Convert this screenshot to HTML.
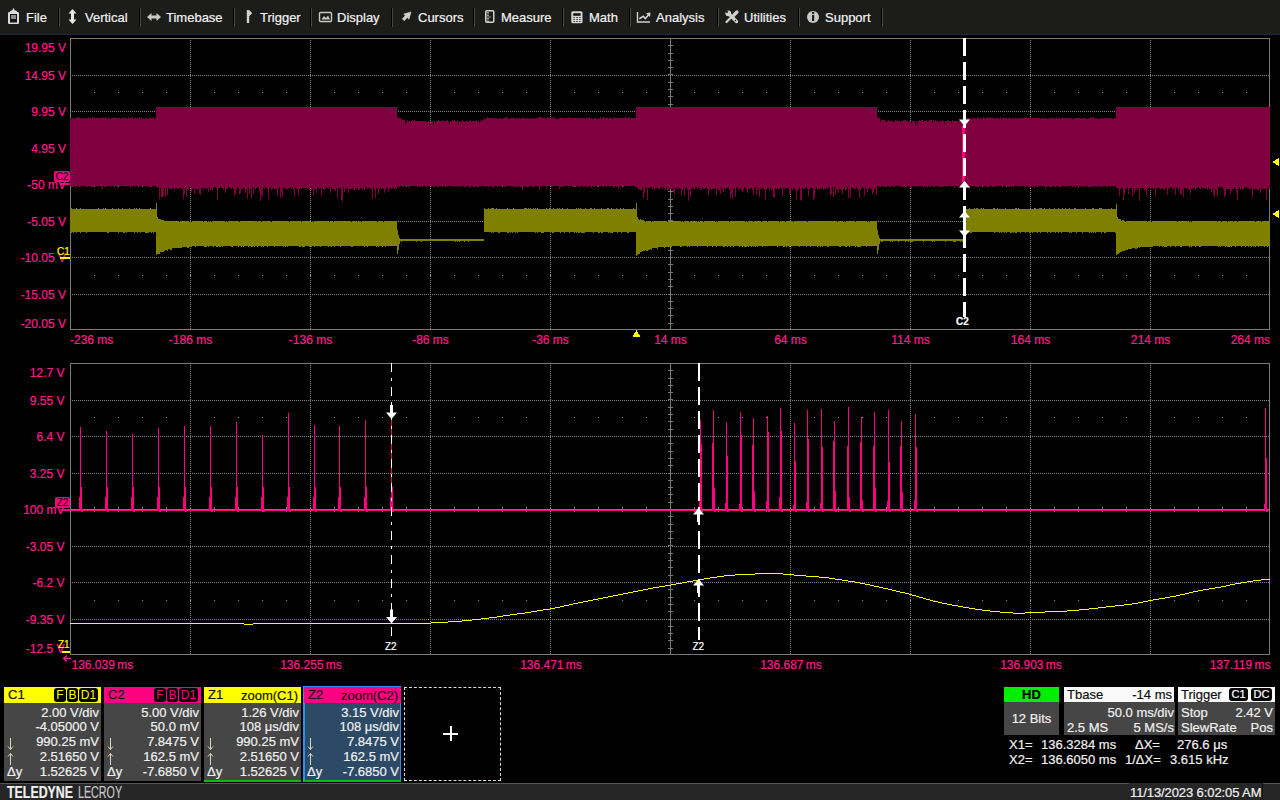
<!DOCTYPE html><html><head><meta charset="utf-8"><style>
*{margin:0;padding:0;box-sizing:border-box}
html,body{width:1280px;height:800px;overflow:hidden;background:#000;font-family:"Liberation Sans",sans-serif;-webkit-text-stroke:0.2px currentColor}
.a{position:absolute;white-space:pre;line-height:1}
#tb{position:absolute;left:0;top:0;width:1280px;height:35px;background:#1c1c1a;border-bottom:1px solid #1c2a38}
.ti{position:absolute;top:11px;font-size:13px;color:#f2f2f2;line-height:13px;white-space:pre}
.sep{position:absolute;top:8px;width:2px;height:19px;border-left:1px solid #000;border-right:1px solid #464646}
.yl{position:absolute;font-size:12px;color:#ff1a8c;line-height:12px;text-align:right;width:60px;left:6px}
.xl{position:absolute;font-size:12px;color:#ff1a8c;line-height:12px;text-align:center;width:100px}
.box{position:absolute;top:687px;height:94px;background:#464646}
.hd{position:absolute;left:0;top:0;right:0;height:16px;font-size:13px;line-height:16px;color:#111;padding-left:4px}
.rw{position:absolute;left:0;right:0;font-size:13px;line-height:13px;color:#f0f0f0;white-space:pre}
.rw .l{position:absolute;left:3px}
.rw .r{position:absolute;right:2px}
.bdg{position:absolute;top:1px;height:14px;background:#000;border-radius:3px;font-size:12px;line-height:14px;text-align:center;-webkit-text-stroke:0}

</style></head><body>
<div id="tb">
<div class="ti" style="left:26px">File</div>
<div class="sep" style="left:58px"></div>
<div class="ti" style="left:85px">Vertical</div>
<div class="sep" style="left:139px"></div>
<div class="ti" style="left:166px">Timebase</div>
<div class="sep" style="left:233px"></div>
<div class="ti" style="left:260px">Trigger</div>
<div class="sep" style="left:310px"></div>
<div class="ti" style="left:337px">Display</div>
<div class="sep" style="left:391px"></div>
<div class="ti" style="left:418px">Cursors</div>
<div class="sep" style="left:473px"></div>
<div class="ti" style="left:501px">Measure</div>
<div class="sep" style="left:562px"></div>
<div class="ti" style="left:589px">Math</div>
<div class="sep" style="left:629px"></div>
<div class="ti" style="left:656px">Analysis</div>
<div class="sep" style="left:717px"></div>
<div class="ti" style="left:744px">Utilities</div>
<div class="sep" style="left:798px"></div>
<div class="ti" style="left:825px">Support</div>
<div class="sep" style="left:881px"></div>
<svg style="position:absolute;left:0;top:0" width="900" height="34">
<rect x="8" y="12" width="11" height="12" rx="1.2" fill="#dcdcdc"/>
<rect x="10" y="14" width="7" height="8.5" fill="#141414"/>
<rect x="11" y="15" width="5" height="4" fill="#8a8a8a"/>
<path d="M9.5,13 L10.5,10.8 L12.3,10.2 L13.5,7.8 L14.7,10.2 L16.5,10.8 L17.5,13 Z" fill="#dcdcdc"/>
<path d="M72.5,9 L76.5,13.5 L74,13.5 L74,19.5 L76.5,19.5 L72.5,24 L68.5,19.5 L71,19.5 L71,13.5 L68.5,13.5 Z" fill="#e8e8e8"/>
<path d="M147,17 L151.5,13 L151.5,15.5 L156.5,15.5 L156.5,13 L161,17 L156.5,21 L156.5,18.5 L151.5,18.5 L151.5,21 Z" fill="#c8c8c8"/>
<path d="M246.8,10 L249.5,10.2 L252.2,13.3 L249.2,16.2 V23 H246.8 Z" fill="#d0d0d0"/>
<rect x="319.5" y="12.5" width="12" height="9" rx="1" fill="none" stroke="#c8c8c8" stroke-width="1.4"/>
<path d="M321.5,19.5 L324,16 L326,18 L328,15.5 L330,19.5 Z" fill="#c8c8c8"/>
<path d="M411,12 L409,19.2 L407.3,17.5 L404.3,20.8 L402.3,18.8 L405.3,15.7 L403.8,14 Z" fill="#d0d0d0" stroke="#d0d0d0" stroke-width="0.6" stroke-linejoin="round"/>
<rect x="485.75" y="10.75" width="8" height="11.5" rx="1" fill="none" stroke="#d0d0d0" stroke-width="1.5"/>
<path d="M486.5,12.5h2.5M486.5,14h2.5M486.5,15.5h2.5M486.5,17h4.5M486.5,18.5h2.5M486.5,20h2.5M486.5,21.5h2.5" stroke="#b8b8b8" stroke-width="0.8"/>
<rect x="571.3" y="11.3" width="11.2" height="12" rx="1.5" fill="#d8d8d8"/>
<rect x="573.2" y="13.2" width="7.4" height="2.6" fill="#141414"/>
<path d="M573.3,17.5h1.6M576.2,17.5h1.6M579.1,17.5h1.6M573.3,19.5h1.6M576.2,19.5h1.6M579.1,19.5h1.6M573.3,21.5h1.6M576.2,21.5h1.6M579.1,21.5h1.6" stroke="#3a3a3a" stroke-width="1"/>
<path d="M637.5,12 V22 H650" fill="none" stroke="#d0d0d0" stroke-width="1.4"/>
<path d="M639.3,18.8 L643.3,16.3 L645.3,18.6 L648.5,15" fill="none" stroke="#d0d0d0" stroke-width="1.6"/>
<path d="M646,13.2 L650.5,12.6 L650,17 Z" fill="#d0d0d0"/>
<path d="M729.5,14.5 L736.5,21.5" stroke="#d0d0d0" stroke-width="3.2" stroke-linecap="round"/>
<circle cx="728.3" cy="13.3" r="2.9" fill="#d0d0d0"/><path d="M727.6,12.6 L725.5,10.5" stroke="#1c1c1a" stroke-width="2"/>
<circle cx="735.5" cy="20.5" r="0.7" fill="#1c1c1a"/>
<path d="M733.5,15.5 L737,12" stroke="#d0d0d0" stroke-width="3.2" stroke-linecap="round"/>
<path d="M726.5,22 L731.5,17" stroke="#d0d0d0" stroke-width="2.2" stroke-linecap="round"/>
<circle cx="813" cy="17" r="6" fill="#c8c8c8"/>
<rect x="812" y="15" width="2.2" height="6" fill="#1b1b1b"/><rect x="812" y="12" width="2.2" height="2" fill="#1b1b1b"/>
</svg>
</div>
<svg style="position:absolute;left:0;top:0" width="1280" height="800" shape-rendering="crispEdges">
<rect x="70.5" y="38.5" width="1199" height="291" fill="none" stroke="#7a7a7a" stroke-width="1"/><line x1="190.5" y1="38" x2="190.5" y2="329" stroke="#828282" stroke-width="1" stroke-dasharray="1 1"/><line x1="310.5" y1="38" x2="310.5" y2="329" stroke="#828282" stroke-width="1" stroke-dasharray="1 1"/><line x1="430.5" y1="38" x2="430.5" y2="329" stroke="#828282" stroke-width="1" stroke-dasharray="1 1"/><line x1="550.5" y1="38" x2="550.5" y2="329" stroke="#828282" stroke-width="1" stroke-dasharray="1 1"/><rect x="670" y="38" width="1" height="291" fill="#7a7a7a"/><rect x="668" y="45" width="5" height="1" fill="#7a7a7a"/><rect x="668" y="53" width="5" height="1" fill="#7a7a7a"/><rect x="668" y="60" width="5" height="1" fill="#7a7a7a"/><rect x="668" y="67" width="5" height="1" fill="#7a7a7a"/><rect x="668" y="74" width="5" height="1" fill="#7a7a7a"/><rect x="668" y="82" width="5" height="1" fill="#7a7a7a"/><rect x="668" y="89" width="5" height="1" fill="#7a7a7a"/><rect x="668" y="96" width="5" height="1" fill="#7a7a7a"/><rect x="668" y="104" width="5" height="1" fill="#7a7a7a"/><rect x="668" y="111" width="5" height="1" fill="#7a7a7a"/><rect x="668" y="118" width="5" height="1" fill="#7a7a7a"/><rect x="668" y="126" width="5" height="1" fill="#7a7a7a"/><rect x="668" y="133" width="5" height="1" fill="#7a7a7a"/><rect x="668" y="140" width="5" height="1" fill="#7a7a7a"/><rect x="668" y="148" width="5" height="1" fill="#7a7a7a"/><rect x="668" y="155" width="5" height="1" fill="#7a7a7a"/><rect x="668" y="162" width="5" height="1" fill="#7a7a7a"/><rect x="668" y="169" width="5" height="1" fill="#7a7a7a"/><rect x="668" y="177" width="5" height="1" fill="#7a7a7a"/><rect x="668" y="184" width="5" height="1" fill="#7a7a7a"/><rect x="668" y="191" width="5" height="1" fill="#7a7a7a"/><rect x="668" y="199" width="5" height="1" fill="#7a7a7a"/><rect x="668" y="206" width="5" height="1" fill="#7a7a7a"/><rect x="668" y="213" width="5" height="1" fill="#7a7a7a"/><rect x="668" y="220" width="5" height="1" fill="#7a7a7a"/><rect x="668" y="228" width="5" height="1" fill="#7a7a7a"/><rect x="668" y="235" width="5" height="1" fill="#7a7a7a"/><rect x="668" y="242" width="5" height="1" fill="#7a7a7a"/><rect x="668" y="250" width="5" height="1" fill="#7a7a7a"/><rect x="668" y="257" width="5" height="1" fill="#7a7a7a"/><rect x="668" y="264" width="5" height="1" fill="#7a7a7a"/><rect x="668" y="272" width="5" height="1" fill="#7a7a7a"/><rect x="668" y="279" width="5" height="1" fill="#7a7a7a"/><rect x="668" y="286" width="5" height="1" fill="#7a7a7a"/><rect x="668" y="294" width="5" height="1" fill="#7a7a7a"/><rect x="668" y="301" width="5" height="1" fill="#7a7a7a"/><rect x="668" y="308" width="5" height="1" fill="#7a7a7a"/><rect x="668" y="315" width="5" height="1" fill="#7a7a7a"/><rect x="668" y="323" width="5" height="1" fill="#7a7a7a"/><line x1="790.5" y1="38" x2="790.5" y2="329" stroke="#828282" stroke-width="1" stroke-dasharray="1 1"/><line x1="910.5" y1="38" x2="910.5" y2="329" stroke="#828282" stroke-width="1" stroke-dasharray="1 1"/><line x1="1030.5" y1="38" x2="1030.5" y2="329" stroke="#828282" stroke-width="1" stroke-dasharray="1 1"/><line x1="1150.5" y1="38" x2="1150.5" y2="329" stroke="#828282" stroke-width="1" stroke-dasharray="1 1"/><line x1="70" y1="75.5" x2="1269" y2="75.5" stroke="#828282" stroke-width="1" stroke-dasharray="1 1"/><line x1="70" y1="111.5" x2="1269" y2="111.5" stroke="#828282" stroke-width="1" stroke-dasharray="1 1"/><line x1="70" y1="148.5" x2="1269" y2="148.5" stroke="#828282" stroke-width="1" stroke-dasharray="1 1"/><rect x="70" y="184" width="1199" height="1" fill="#7a7a7a"/><rect x="94" y="182" width="1" height="5" fill="#7a7a7a"/><rect x="118" y="182" width="1" height="5" fill="#7a7a7a"/><rect x="142" y="182" width="1" height="5" fill="#7a7a7a"/><rect x="166" y="182" width="1" height="5" fill="#7a7a7a"/><rect x="190" y="182" width="1" height="5" fill="#7a7a7a"/><rect x="214" y="182" width="1" height="5" fill="#7a7a7a"/><rect x="238" y="182" width="1" height="5" fill="#7a7a7a"/><rect x="262" y="182" width="1" height="5" fill="#7a7a7a"/><rect x="286" y="182" width="1" height="5" fill="#7a7a7a"/><rect x="310" y="182" width="1" height="5" fill="#7a7a7a"/><rect x="334" y="182" width="1" height="5" fill="#7a7a7a"/><rect x="358" y="182" width="1" height="5" fill="#7a7a7a"/><rect x="382" y="182" width="1" height="5" fill="#7a7a7a"/><rect x="406" y="182" width="1" height="5" fill="#7a7a7a"/><rect x="430" y="182" width="1" height="5" fill="#7a7a7a"/><rect x="454" y="182" width="1" height="5" fill="#7a7a7a"/><rect x="478" y="182" width="1" height="5" fill="#7a7a7a"/><rect x="502" y="182" width="1" height="5" fill="#7a7a7a"/><rect x="526" y="182" width="1" height="5" fill="#7a7a7a"/><rect x="550" y="182" width="1" height="5" fill="#7a7a7a"/><rect x="574" y="182" width="1" height="5" fill="#7a7a7a"/><rect x="598" y="182" width="1" height="5" fill="#7a7a7a"/><rect x="622" y="182" width="1" height="5" fill="#7a7a7a"/><rect x="646" y="182" width="1" height="5" fill="#7a7a7a"/><rect x="670" y="182" width="1" height="5" fill="#7a7a7a"/><rect x="694" y="182" width="1" height="5" fill="#7a7a7a"/><rect x="718" y="182" width="1" height="5" fill="#7a7a7a"/><rect x="742" y="182" width="1" height="5" fill="#7a7a7a"/><rect x="766" y="182" width="1" height="5" fill="#7a7a7a"/><rect x="790" y="182" width="1" height="5" fill="#7a7a7a"/><rect x="814" y="182" width="1" height="5" fill="#7a7a7a"/><rect x="838" y="182" width="1" height="5" fill="#7a7a7a"/><rect x="862" y="182" width="1" height="5" fill="#7a7a7a"/><rect x="886" y="182" width="1" height="5" fill="#7a7a7a"/><rect x="910" y="182" width="1" height="5" fill="#7a7a7a"/><rect x="934" y="182" width="1" height="5" fill="#7a7a7a"/><rect x="958" y="182" width="1" height="5" fill="#7a7a7a"/><rect x="982" y="182" width="1" height="5" fill="#7a7a7a"/><rect x="1006" y="182" width="1" height="5" fill="#7a7a7a"/><rect x="1030" y="182" width="1" height="5" fill="#7a7a7a"/><rect x="1054" y="182" width="1" height="5" fill="#7a7a7a"/><rect x="1078" y="182" width="1" height="5" fill="#7a7a7a"/><rect x="1102" y="182" width="1" height="5" fill="#7a7a7a"/><rect x="1126" y="182" width="1" height="5" fill="#7a7a7a"/><rect x="1150" y="182" width="1" height="5" fill="#7a7a7a"/><rect x="1174" y="182" width="1" height="5" fill="#7a7a7a"/><rect x="1198" y="182" width="1" height="5" fill="#7a7a7a"/><rect x="1222" y="182" width="1" height="5" fill="#7a7a7a"/><rect x="1246" y="182" width="1" height="5" fill="#7a7a7a"/><line x1="70" y1="221.5" x2="1269" y2="221.5" stroke="#828282" stroke-width="1" stroke-dasharray="1 1"/><line x1="70" y1="257.5" x2="1269" y2="257.5" stroke="#828282" stroke-width="1" stroke-dasharray="1 1"/><line x1="70" y1="294.5" x2="1269" y2="294.5" stroke="#828282" stroke-width="1" stroke-dasharray="1 1"/><rect x="94" y="92" width="1" height="1" fill="#9a9a9a"/><rect x="118" y="92" width="1" height="1" fill="#9a9a9a"/><rect x="142" y="92" width="1" height="1" fill="#9a9a9a"/><rect x="166" y="92" width="1" height="1" fill="#9a9a9a"/><rect x="190" y="92" width="1" height="1" fill="#9a9a9a"/><rect x="214" y="92" width="1" height="1" fill="#9a9a9a"/><rect x="238" y="92" width="1" height="1" fill="#9a9a9a"/><rect x="262" y="92" width="1" height="1" fill="#9a9a9a"/><rect x="286" y="92" width="1" height="1" fill="#9a9a9a"/><rect x="310" y="92" width="1" height="1" fill="#9a9a9a"/><rect x="334" y="92" width="1" height="1" fill="#9a9a9a"/><rect x="358" y="92" width="1" height="1" fill="#9a9a9a"/><rect x="382" y="92" width="1" height="1" fill="#9a9a9a"/><rect x="406" y="92" width="1" height="1" fill="#9a9a9a"/><rect x="430" y="92" width="1" height="1" fill="#9a9a9a"/><rect x="454" y="92" width="1" height="1" fill="#9a9a9a"/><rect x="478" y="92" width="1" height="1" fill="#9a9a9a"/><rect x="502" y="92" width="1" height="1" fill="#9a9a9a"/><rect x="526" y="92" width="1" height="1" fill="#9a9a9a"/><rect x="550" y="92" width="1" height="1" fill="#9a9a9a"/><rect x="574" y="92" width="1" height="1" fill="#9a9a9a"/><rect x="598" y="92" width="1" height="1" fill="#9a9a9a"/><rect x="622" y="92" width="1" height="1" fill="#9a9a9a"/><rect x="646" y="92" width="1" height="1" fill="#9a9a9a"/><rect x="670" y="92" width="1" height="1" fill="#9a9a9a"/><rect x="694" y="92" width="1" height="1" fill="#9a9a9a"/><rect x="718" y="92" width="1" height="1" fill="#9a9a9a"/><rect x="742" y="92" width="1" height="1" fill="#9a9a9a"/><rect x="766" y="92" width="1" height="1" fill="#9a9a9a"/><rect x="790" y="92" width="1" height="1" fill="#9a9a9a"/><rect x="814" y="92" width="1" height="1" fill="#9a9a9a"/><rect x="838" y="92" width="1" height="1" fill="#9a9a9a"/><rect x="862" y="92" width="1" height="1" fill="#9a9a9a"/><rect x="886" y="92" width="1" height="1" fill="#9a9a9a"/><rect x="910" y="92" width="1" height="1" fill="#9a9a9a"/><rect x="934" y="92" width="1" height="1" fill="#9a9a9a"/><rect x="958" y="92" width="1" height="1" fill="#9a9a9a"/><rect x="982" y="92" width="1" height="1" fill="#9a9a9a"/><rect x="1006" y="92" width="1" height="1" fill="#9a9a9a"/><rect x="1030" y="92" width="1" height="1" fill="#9a9a9a"/><rect x="1054" y="92" width="1" height="1" fill="#9a9a9a"/><rect x="1078" y="92" width="1" height="1" fill="#9a9a9a"/><rect x="1102" y="92" width="1" height="1" fill="#9a9a9a"/><rect x="1126" y="92" width="1" height="1" fill="#9a9a9a"/><rect x="1150" y="92" width="1" height="1" fill="#9a9a9a"/><rect x="1174" y="92" width="1" height="1" fill="#9a9a9a"/><rect x="1198" y="92" width="1" height="1" fill="#9a9a9a"/><rect x="1222" y="92" width="1" height="1" fill="#9a9a9a"/><rect x="1246" y="92" width="1" height="1" fill="#9a9a9a"/><rect x="94" y="275" width="1" height="1" fill="#9a9a9a"/><rect x="118" y="275" width="1" height="1" fill="#9a9a9a"/><rect x="142" y="275" width="1" height="1" fill="#9a9a9a"/><rect x="166" y="275" width="1" height="1" fill="#9a9a9a"/><rect x="190" y="275" width="1" height="1" fill="#9a9a9a"/><rect x="214" y="275" width="1" height="1" fill="#9a9a9a"/><rect x="238" y="275" width="1" height="1" fill="#9a9a9a"/><rect x="262" y="275" width="1" height="1" fill="#9a9a9a"/><rect x="286" y="275" width="1" height="1" fill="#9a9a9a"/><rect x="310" y="275" width="1" height="1" fill="#9a9a9a"/><rect x="334" y="275" width="1" height="1" fill="#9a9a9a"/><rect x="358" y="275" width="1" height="1" fill="#9a9a9a"/><rect x="382" y="275" width="1" height="1" fill="#9a9a9a"/><rect x="406" y="275" width="1" height="1" fill="#9a9a9a"/><rect x="430" y="275" width="1" height="1" fill="#9a9a9a"/><rect x="454" y="275" width="1" height="1" fill="#9a9a9a"/><rect x="478" y="275" width="1" height="1" fill="#9a9a9a"/><rect x="502" y="275" width="1" height="1" fill="#9a9a9a"/><rect x="526" y="275" width="1" height="1" fill="#9a9a9a"/><rect x="550" y="275" width="1" height="1" fill="#9a9a9a"/><rect x="574" y="275" width="1" height="1" fill="#9a9a9a"/><rect x="598" y="275" width="1" height="1" fill="#9a9a9a"/><rect x="622" y="275" width="1" height="1" fill="#9a9a9a"/><rect x="646" y="275" width="1" height="1" fill="#9a9a9a"/><rect x="670" y="275" width="1" height="1" fill="#9a9a9a"/><rect x="694" y="275" width="1" height="1" fill="#9a9a9a"/><rect x="718" y="275" width="1" height="1" fill="#9a9a9a"/><rect x="742" y="275" width="1" height="1" fill="#9a9a9a"/><rect x="766" y="275" width="1" height="1" fill="#9a9a9a"/><rect x="790" y="275" width="1" height="1" fill="#9a9a9a"/><rect x="814" y="275" width="1" height="1" fill="#9a9a9a"/><rect x="838" y="275" width="1" height="1" fill="#9a9a9a"/><rect x="862" y="275" width="1" height="1" fill="#9a9a9a"/><rect x="886" y="275" width="1" height="1" fill="#9a9a9a"/><rect x="910" y="275" width="1" height="1" fill="#9a9a9a"/><rect x="934" y="275" width="1" height="1" fill="#9a9a9a"/><rect x="958" y="275" width="1" height="1" fill="#9a9a9a"/><rect x="982" y="275" width="1" height="1" fill="#9a9a9a"/><rect x="1006" y="275" width="1" height="1" fill="#9a9a9a"/><rect x="1030" y="275" width="1" height="1" fill="#9a9a9a"/><rect x="1054" y="275" width="1" height="1" fill="#9a9a9a"/><rect x="1078" y="275" width="1" height="1" fill="#9a9a9a"/><rect x="1102" y="275" width="1" height="1" fill="#9a9a9a"/><rect x="1126" y="275" width="1" height="1" fill="#9a9a9a"/><rect x="1150" y="275" width="1" height="1" fill="#9a9a9a"/><rect x="1174" y="275" width="1" height="1" fill="#9a9a9a"/><rect x="1198" y="275" width="1" height="1" fill="#9a9a9a"/><rect x="1222" y="275" width="1" height="1" fill="#9a9a9a"/><rect x="1246" y="275" width="1" height="1" fill="#9a9a9a"/><rect x="70.5" y="363.5" width="1199" height="291" fill="none" stroke="#7a7a7a" stroke-width="1"/><line x1="190.5" y1="363" x2="190.5" y2="654" stroke="#828282" stroke-width="1" stroke-dasharray="1 1"/><line x1="310.5" y1="363" x2="310.5" y2="654" stroke="#828282" stroke-width="1" stroke-dasharray="1 1"/><line x1="430.5" y1="363" x2="430.5" y2="654" stroke="#828282" stroke-width="1" stroke-dasharray="1 1"/><line x1="550.5" y1="363" x2="550.5" y2="654" stroke="#828282" stroke-width="1" stroke-dasharray="1 1"/><rect x="670" y="363" width="1" height="291" fill="#7a7a7a"/><rect x="668" y="370" width="5" height="1" fill="#7a7a7a"/><rect x="668" y="378" width="5" height="1" fill="#7a7a7a"/><rect x="668" y="385" width="5" height="1" fill="#7a7a7a"/><rect x="668" y="392" width="5" height="1" fill="#7a7a7a"/><rect x="668" y="399" width="5" height="1" fill="#7a7a7a"/><rect x="668" y="407" width="5" height="1" fill="#7a7a7a"/><rect x="668" y="414" width="5" height="1" fill="#7a7a7a"/><rect x="668" y="421" width="5" height="1" fill="#7a7a7a"/><rect x="668" y="429" width="5" height="1" fill="#7a7a7a"/><rect x="668" y="436" width="5" height="1" fill="#7a7a7a"/><rect x="668" y="443" width="5" height="1" fill="#7a7a7a"/><rect x="668" y="451" width="5" height="1" fill="#7a7a7a"/><rect x="668" y="458" width="5" height="1" fill="#7a7a7a"/><rect x="668" y="465" width="5" height="1" fill="#7a7a7a"/><rect x="668" y="473" width="5" height="1" fill="#7a7a7a"/><rect x="668" y="480" width="5" height="1" fill="#7a7a7a"/><rect x="668" y="487" width="5" height="1" fill="#7a7a7a"/><rect x="668" y="494" width="5" height="1" fill="#7a7a7a"/><rect x="668" y="502" width="5" height="1" fill="#7a7a7a"/><rect x="668" y="509" width="5" height="1" fill="#7a7a7a"/><rect x="668" y="516" width="5" height="1" fill="#7a7a7a"/><rect x="668" y="524" width="5" height="1" fill="#7a7a7a"/><rect x="668" y="531" width="5" height="1" fill="#7a7a7a"/><rect x="668" y="538" width="5" height="1" fill="#7a7a7a"/><rect x="668" y="545" width="5" height="1" fill="#7a7a7a"/><rect x="668" y="553" width="5" height="1" fill="#7a7a7a"/><rect x="668" y="560" width="5" height="1" fill="#7a7a7a"/><rect x="668" y="567" width="5" height="1" fill="#7a7a7a"/><rect x="668" y="575" width="5" height="1" fill="#7a7a7a"/><rect x="668" y="582" width="5" height="1" fill="#7a7a7a"/><rect x="668" y="589" width="5" height="1" fill="#7a7a7a"/><rect x="668" y="597" width="5" height="1" fill="#7a7a7a"/><rect x="668" y="604" width="5" height="1" fill="#7a7a7a"/><rect x="668" y="611" width="5" height="1" fill="#7a7a7a"/><rect x="668" y="619" width="5" height="1" fill="#7a7a7a"/><rect x="668" y="626" width="5" height="1" fill="#7a7a7a"/><rect x="668" y="633" width="5" height="1" fill="#7a7a7a"/><rect x="668" y="640" width="5" height="1" fill="#7a7a7a"/><rect x="668" y="648" width="5" height="1" fill="#7a7a7a"/><line x1="790.5" y1="363" x2="790.5" y2="654" stroke="#828282" stroke-width="1" stroke-dasharray="1 1"/><line x1="910.5" y1="363" x2="910.5" y2="654" stroke="#828282" stroke-width="1" stroke-dasharray="1 1"/><line x1="1030.5" y1="363" x2="1030.5" y2="654" stroke="#828282" stroke-width="1" stroke-dasharray="1 1"/><line x1="1150.5" y1="363" x2="1150.5" y2="654" stroke="#828282" stroke-width="1" stroke-dasharray="1 1"/><line x1="70" y1="400.5" x2="1269" y2="400.5" stroke="#828282" stroke-width="1" stroke-dasharray="1 1"/><line x1="70" y1="436.5" x2="1269" y2="436.5" stroke="#828282" stroke-width="1" stroke-dasharray="1 1"/><line x1="70" y1="473.5" x2="1269" y2="473.5" stroke="#828282" stroke-width="1" stroke-dasharray="1 1"/><rect x="70" y="509" width="1199" height="1" fill="#7a7a7a"/><rect x="94" y="507" width="1" height="5" fill="#7a7a7a"/><rect x="118" y="507" width="1" height="5" fill="#7a7a7a"/><rect x="142" y="507" width="1" height="5" fill="#7a7a7a"/><rect x="166" y="507" width="1" height="5" fill="#7a7a7a"/><rect x="190" y="507" width="1" height="5" fill="#7a7a7a"/><rect x="214" y="507" width="1" height="5" fill="#7a7a7a"/><rect x="238" y="507" width="1" height="5" fill="#7a7a7a"/><rect x="262" y="507" width="1" height="5" fill="#7a7a7a"/><rect x="286" y="507" width="1" height="5" fill="#7a7a7a"/><rect x="310" y="507" width="1" height="5" fill="#7a7a7a"/><rect x="334" y="507" width="1" height="5" fill="#7a7a7a"/><rect x="358" y="507" width="1" height="5" fill="#7a7a7a"/><rect x="382" y="507" width="1" height="5" fill="#7a7a7a"/><rect x="406" y="507" width="1" height="5" fill="#7a7a7a"/><rect x="430" y="507" width="1" height="5" fill="#7a7a7a"/><rect x="454" y="507" width="1" height="5" fill="#7a7a7a"/><rect x="478" y="507" width="1" height="5" fill="#7a7a7a"/><rect x="502" y="507" width="1" height="5" fill="#7a7a7a"/><rect x="526" y="507" width="1" height="5" fill="#7a7a7a"/><rect x="550" y="507" width="1" height="5" fill="#7a7a7a"/><rect x="574" y="507" width="1" height="5" fill="#7a7a7a"/><rect x="598" y="507" width="1" height="5" fill="#7a7a7a"/><rect x="622" y="507" width="1" height="5" fill="#7a7a7a"/><rect x="646" y="507" width="1" height="5" fill="#7a7a7a"/><rect x="670" y="507" width="1" height="5" fill="#7a7a7a"/><rect x="694" y="507" width="1" height="5" fill="#7a7a7a"/><rect x="718" y="507" width="1" height="5" fill="#7a7a7a"/><rect x="742" y="507" width="1" height="5" fill="#7a7a7a"/><rect x="766" y="507" width="1" height="5" fill="#7a7a7a"/><rect x="790" y="507" width="1" height="5" fill="#7a7a7a"/><rect x="814" y="507" width="1" height="5" fill="#7a7a7a"/><rect x="838" y="507" width="1" height="5" fill="#7a7a7a"/><rect x="862" y="507" width="1" height="5" fill="#7a7a7a"/><rect x="886" y="507" width="1" height="5" fill="#7a7a7a"/><rect x="910" y="507" width="1" height="5" fill="#7a7a7a"/><rect x="934" y="507" width="1" height="5" fill="#7a7a7a"/><rect x="958" y="507" width="1" height="5" fill="#7a7a7a"/><rect x="982" y="507" width="1" height="5" fill="#7a7a7a"/><rect x="1006" y="507" width="1" height="5" fill="#7a7a7a"/><rect x="1030" y="507" width="1" height="5" fill="#7a7a7a"/><rect x="1054" y="507" width="1" height="5" fill="#7a7a7a"/><rect x="1078" y="507" width="1" height="5" fill="#7a7a7a"/><rect x="1102" y="507" width="1" height="5" fill="#7a7a7a"/><rect x="1126" y="507" width="1" height="5" fill="#7a7a7a"/><rect x="1150" y="507" width="1" height="5" fill="#7a7a7a"/><rect x="1174" y="507" width="1" height="5" fill="#7a7a7a"/><rect x="1198" y="507" width="1" height="5" fill="#7a7a7a"/><rect x="1222" y="507" width="1" height="5" fill="#7a7a7a"/><rect x="1246" y="507" width="1" height="5" fill="#7a7a7a"/><line x1="70" y1="546.5" x2="1269" y2="546.5" stroke="#828282" stroke-width="1" stroke-dasharray="1 1"/><line x1="70" y1="582.5" x2="1269" y2="582.5" stroke="#828282" stroke-width="1" stroke-dasharray="1 1"/><line x1="70" y1="619.5" x2="1269" y2="619.5" stroke="#828282" stroke-width="1" stroke-dasharray="1 1"/><rect x="94" y="417" width="1" height="1" fill="#9a9a9a"/><rect x="118" y="417" width="1" height="1" fill="#9a9a9a"/><rect x="142" y="417" width="1" height="1" fill="#9a9a9a"/><rect x="166" y="417" width="1" height="1" fill="#9a9a9a"/><rect x="190" y="417" width="1" height="1" fill="#9a9a9a"/><rect x="214" y="417" width="1" height="1" fill="#9a9a9a"/><rect x="238" y="417" width="1" height="1" fill="#9a9a9a"/><rect x="262" y="417" width="1" height="1" fill="#9a9a9a"/><rect x="286" y="417" width="1" height="1" fill="#9a9a9a"/><rect x="310" y="417" width="1" height="1" fill="#9a9a9a"/><rect x="334" y="417" width="1" height="1" fill="#9a9a9a"/><rect x="358" y="417" width="1" height="1" fill="#9a9a9a"/><rect x="382" y="417" width="1" height="1" fill="#9a9a9a"/><rect x="406" y="417" width="1" height="1" fill="#9a9a9a"/><rect x="430" y="417" width="1" height="1" fill="#9a9a9a"/><rect x="454" y="417" width="1" height="1" fill="#9a9a9a"/><rect x="478" y="417" width="1" height="1" fill="#9a9a9a"/><rect x="502" y="417" width="1" height="1" fill="#9a9a9a"/><rect x="526" y="417" width="1" height="1" fill="#9a9a9a"/><rect x="550" y="417" width="1" height="1" fill="#9a9a9a"/><rect x="574" y="417" width="1" height="1" fill="#9a9a9a"/><rect x="598" y="417" width="1" height="1" fill="#9a9a9a"/><rect x="622" y="417" width="1" height="1" fill="#9a9a9a"/><rect x="646" y="417" width="1" height="1" fill="#9a9a9a"/><rect x="670" y="417" width="1" height="1" fill="#9a9a9a"/><rect x="694" y="417" width="1" height="1" fill="#9a9a9a"/><rect x="718" y="417" width="1" height="1" fill="#9a9a9a"/><rect x="742" y="417" width="1" height="1" fill="#9a9a9a"/><rect x="766" y="417" width="1" height="1" fill="#9a9a9a"/><rect x="790" y="417" width="1" height="1" fill="#9a9a9a"/><rect x="814" y="417" width="1" height="1" fill="#9a9a9a"/><rect x="838" y="417" width="1" height="1" fill="#9a9a9a"/><rect x="862" y="417" width="1" height="1" fill="#9a9a9a"/><rect x="886" y="417" width="1" height="1" fill="#9a9a9a"/><rect x="910" y="417" width="1" height="1" fill="#9a9a9a"/><rect x="934" y="417" width="1" height="1" fill="#9a9a9a"/><rect x="958" y="417" width="1" height="1" fill="#9a9a9a"/><rect x="982" y="417" width="1" height="1" fill="#9a9a9a"/><rect x="1006" y="417" width="1" height="1" fill="#9a9a9a"/><rect x="1030" y="417" width="1" height="1" fill="#9a9a9a"/><rect x="1054" y="417" width="1" height="1" fill="#9a9a9a"/><rect x="1078" y="417" width="1" height="1" fill="#9a9a9a"/><rect x="1102" y="417" width="1" height="1" fill="#9a9a9a"/><rect x="1126" y="417" width="1" height="1" fill="#9a9a9a"/><rect x="1150" y="417" width="1" height="1" fill="#9a9a9a"/><rect x="1174" y="417" width="1" height="1" fill="#9a9a9a"/><rect x="1198" y="417" width="1" height="1" fill="#9a9a9a"/><rect x="1222" y="417" width="1" height="1" fill="#9a9a9a"/><rect x="1246" y="417" width="1" height="1" fill="#9a9a9a"/><rect x="94" y="600" width="1" height="1" fill="#9a9a9a"/><rect x="118" y="600" width="1" height="1" fill="#9a9a9a"/><rect x="142" y="600" width="1" height="1" fill="#9a9a9a"/><rect x="166" y="600" width="1" height="1" fill="#9a9a9a"/><rect x="190" y="600" width="1" height="1" fill="#9a9a9a"/><rect x="214" y="600" width="1" height="1" fill="#9a9a9a"/><rect x="238" y="600" width="1" height="1" fill="#9a9a9a"/><rect x="262" y="600" width="1" height="1" fill="#9a9a9a"/><rect x="286" y="600" width="1" height="1" fill="#9a9a9a"/><rect x="310" y="600" width="1" height="1" fill="#9a9a9a"/><rect x="334" y="600" width="1" height="1" fill="#9a9a9a"/><rect x="358" y="600" width="1" height="1" fill="#9a9a9a"/><rect x="382" y="600" width="1" height="1" fill="#9a9a9a"/><rect x="406" y="600" width="1" height="1" fill="#9a9a9a"/><rect x="430" y="600" width="1" height="1" fill="#9a9a9a"/><rect x="454" y="600" width="1" height="1" fill="#9a9a9a"/><rect x="478" y="600" width="1" height="1" fill="#9a9a9a"/><rect x="502" y="600" width="1" height="1" fill="#9a9a9a"/><rect x="526" y="600" width="1" height="1" fill="#9a9a9a"/><rect x="550" y="600" width="1" height="1" fill="#9a9a9a"/><rect x="574" y="600" width="1" height="1" fill="#9a9a9a"/><rect x="598" y="600" width="1" height="1" fill="#9a9a9a"/><rect x="622" y="600" width="1" height="1" fill="#9a9a9a"/><rect x="646" y="600" width="1" height="1" fill="#9a9a9a"/><rect x="670" y="600" width="1" height="1" fill="#9a9a9a"/><rect x="694" y="600" width="1" height="1" fill="#9a9a9a"/><rect x="718" y="600" width="1" height="1" fill="#9a9a9a"/><rect x="742" y="600" width="1" height="1" fill="#9a9a9a"/><rect x="766" y="600" width="1" height="1" fill="#9a9a9a"/><rect x="790" y="600" width="1" height="1" fill="#9a9a9a"/><rect x="814" y="600" width="1" height="1" fill="#9a9a9a"/><rect x="838" y="600" width="1" height="1" fill="#9a9a9a"/><rect x="862" y="600" width="1" height="1" fill="#9a9a9a"/><rect x="886" y="600" width="1" height="1" fill="#9a9a9a"/><rect x="910" y="600" width="1" height="1" fill="#9a9a9a"/><rect x="934" y="600" width="1" height="1" fill="#9a9a9a"/><rect x="958" y="600" width="1" height="1" fill="#9a9a9a"/><rect x="982" y="600" width="1" height="1" fill="#9a9a9a"/><rect x="1006" y="600" width="1" height="1" fill="#9a9a9a"/><rect x="1030" y="600" width="1" height="1" fill="#9a9a9a"/><rect x="1054" y="600" width="1" height="1" fill="#9a9a9a"/><rect x="1078" y="600" width="1" height="1" fill="#9a9a9a"/><rect x="1102" y="600" width="1" height="1" fill="#9a9a9a"/><rect x="1126" y="600" width="1" height="1" fill="#9a9a9a"/><rect x="1150" y="600" width="1" height="1" fill="#9a9a9a"/><rect x="1174" y="600" width="1" height="1" fill="#9a9a9a"/><rect x="1198" y="600" width="1" height="1" fill="#9a9a9a"/><rect x="1222" y="600" width="1" height="1" fill="#9a9a9a"/><rect x="1246" y="600" width="1" height="1" fill="#9a9a9a"/><path d="M70,118V118H71V119H72V118H73V118H74V119H75V118H76V118H77V117H78V117H79V118H80V118H81V119H82V118H83V118H84V118H85V119H86V118H87V118H88V117H89V118H90V118H91V119H92V117H93V118H94V117H95V118H96V118H97V118H98V118H99V118H100V118H101V118H102V118H103V117H104V118H105V117H106V118H107V119H108V117H109V119H110V119H111V118H112V118H113V118H114V117H115V118H116V118H117V118H118V118H119V118H120V119H121V118H122V118H123V117H124V118H125V118H126V118H127V119H128V117H129V118H130V118H131V118H132V117H133V119H134V118H135V118H136V119H137V118H138V119H139V117H140V119H141V117H142V119H143V118H144V119H145V118H146V118H147V119H148V119H149V118H150V118H151V118H152V118H153V117H154V119H155V118H156V107H157V107H158V107H159V107H160V107H161V107H162V107H163V107H164V107H165V107H166V107H167V107H168V107H169V107H170V107H171V107H172V107H173V107H174V107H175V107H176V107H177V107H178V107H179V107H180V107H181V107H182V107H183V107H184V107H185V107H186V107H187V107H188V107H189V107H190V107H191V107H192V107H193V107H194V107H195V107H196V107H197V107H198V107H199V107H200V107H201V107H202V107H203V107H204V107H205V107H206V107H207V107H208V107H209V107H210V107H211V107H212V107H213V107H214V107H215V107H216V107H217V107H218V107H219V107H220V107H221V107H222V107H223V107H224V107H225V107H226V107H227V107H228V107H229V107H230V107H231V107H232V107H233V107H234V107H235V107H236V107H237V107H238V107H239V107H240V107H241V107H242V107H243V107H244V107H245V107H246V107H247V107H248V107H249V107H250V107H251V107H252V107H253V107H254V107H255V107H256V107H257V107H258V107H259V107H260V107H261V107H262V107H263V107H264V107H265V107H266V107H267V107H268V107H269V107H270V107H271V107H272V107H273V107H274V107H275V107H276V107H277V107H278V107H279V107H280V107H281V107H282V107H283V107H284V107H285V107H286V107H287V107H288V107H289V107H290V107H291V107H292V107H293V107H294V107H295V107H296V107H297V107H298V107H299V107H300V107H301V107H302V107H303V107H304V107H305V107H306V107H307V107H308V107H309V107H310V107H311V107H312V107H313V107H314V107H315V107H316V107H317V107H318V107H319V107H320V107H321V107H322V107H323V107H324V107H325V107H326V107H327V107H328V107H329V107H330V107H331V107H332V107H333V107H334V107H335V107H336V107H337V107H338V107H339V107H340V107H341V107H342V107H343V107H344V107H345V107H346V107H347V107H348V107H349V107H350V107H351V107H352V107H353V107H354V107H355V107H356V107H357V107H358V107H359V107H360V107H361V107H362V107H363V107H364V107H365V107H366V107H367V107H368V107H369V107H370V107H371V107H372V107H373V107H374V107H375V107H376V107H377V107H378V107H379V107H380V107H381V107H382V107H383V107H384V107H385V107H386V107H387V107H388V107H389V107H390V107H391V107H392V107H393V107H394V107H395V107H396V107H397V117H398V118H399V118H400V118H401V119H402V120H403V120H404V120H405V124H406V122H407V120H408V121H409V121H410V122H411V121H412V120H413V121H414V120H415V121H416V121H417V121H418V121H419V121H420V121H421V121H422V121H423V121H424V121H425V121H426V122H427V122H428V121H429V122H430V123H431V121H432V121H433V125H434V121H435V123H436V121H437V121H438V120H439V121H440V121H441V121H442V120H443V121H444V121H445V121H446V121H447V120H448V121H449V124H450V121H451V122H452V120H453V121H454V120H455V121H456V122H457V120H458V125H459V121H460V121H461V122H462V120H463V121H464V122H465V121H466V121H467V121H468V122H469V121H470V120H471V122H472V121H473V121H474V121H475V121H476V120H477V122H478V121H479V123H480V121H481V120H482V121H483V120H484V118H485V119H486V119H487V117H488V118H489V118H490V118H491V118H492V118H493V118H494V119H495V118H496V118H497V119H498V119H499V118H500V118H501V119H502V119H503V118H504V118H505V117H506V118H507V117H508V119H509V119H510V118H511V118H512V118H513V118H514V118H515V119H516V118H517V118H518V119H519V118H520V119H521V118H522V118H523V118H524V118H525V118H526V119H527V118H528V119H529V118H530V119H531V118H532V119H533V118H534V119H535V118H536V118H537V118H538V118H539V117H540V117H541V117H542V118H543V118H544V118H545V119H546V118H547V117H548V118H549V118H550V118H551V118H552V118H553V117H554V118H555V119H556V119H557V119H558V119H559V118H560V118H561V117H562V118H563V118H564V119H565V118H566V118H567V118H568V117H569V118H570V118H571V118H572V118H573V118H574V118H575V118H576V118H577V118H578V118H579V118H580V118H581V119H582V118H583V118H584V118H585V119H586V118H587V118H588V118H589V117H590V119H591V118H592V119H593V119H594V118H595V118H596V119H597V119H598V118H599V119H600V117H601V119H602V118H603V117H604V118H605V118H606V118H607V118H608V119H609V118H610V118H611V118H612V119H613V118H614V117H615V118H616V118H617V118H618V118H619V118H620V118H621V118H622V118H623V118H624V118H625V117H626V118H627V118H628V118H629V117H630V119H631V118H632V118H633V118H634V118H635V118H636V107H637V107H638V107H639V107H640V107H641V107H642V107H643V107H644V107H645V107H646V107H647V107H648V107H649V107H650V107H651V107H652V107H653V107H654V107H655V107H656V107H657V107H658V107H659V107H660V107H661V107H662V107H663V107H664V107H665V107H666V107H667V107H668V107H669V107H670V107H671V107H672V107H673V107H674V107H675V107H676V107H677V107H678V107H679V107H680V107H681V107H682V107H683V107H684V107H685V107H686V107H687V107H688V107H689V107H690V107H691V107H692V107H693V107H694V107H695V107H696V107H697V107H698V107H699V107H700V107H701V107H702V107H703V107H704V107H705V107H706V107H707V107H708V107H709V107H710V107H711V107H712V107H713V107H714V107H715V107H716V107H717V107H718V107H719V107H720V107H721V107H722V107H723V107H724V107H725V107H726V107H727V107H728V107H729V107H730V107H731V107H732V107H733V107H734V107H735V107H736V107H737V107H738V107H739V107H740V107H741V107H742V107H743V107H744V107H745V107H746V107H747V107H748V107H749V107H750V107H751V107H752V107H753V107H754V107H755V107H756V107H757V107H758V107H759V107H760V107H761V107H762V107H763V107H764V107H765V107H766V107H767V107H768V107H769V107H770V107H771V107H772V107H773V107H774V107H775V107H776V107H777V107H778V107H779V107H780V107H781V107H782V107H783V107H784V107H785V107H786V107H787V107H788V107H789V107H790V107H791V107H792V107H793V107H794V107H795V107H796V107H797V107H798V107H799V107H800V107H801V107H802V107H803V107H804V107H805V107H806V107H807V107H808V107H809V107H810V107H811V107H812V107H813V107H814V107H815V107H816V107H817V107H818V107H819V107H820V107H821V107H822V107H823V107H824V107H825V107H826V107H827V107H828V107H829V107H830V107H831V107H832V107H833V107H834V107H835V107H836V107H837V107H838V107H839V107H840V107H841V107H842V107H843V107H844V107H845V107H846V107H847V107H848V107H849V107H850V107H851V107H852V107H853V107H854V107H855V107H856V107H857V107H858V107H859V107H860V107H861V107H862V107H863V107H864V107H865V107H866V107H867V107H868V107H869V107H870V107H871V107H872V107H873V107H874V107H875V107H876V107H877V117H878V118H879V118H880V122H881V119H882V120H883V120H884V120H885V121H886V122H887V121H888V120H889V121H890V121H891V121H892V121H893V122H894V122H895V120H896V121H897V120H898V121H899V121H900V122H901V121H902V121H903V120H904V120H905V120H906V121H907V121H908V122H909V121H910V121H911V123H912V121H913V121H914V121H915V126H916V121H917V124H918V121H919V120H920V121H921V120H922V120H923V122H924V121H925V121H926V120H927V122H928V121H929V120H930V120H931V120H932V123H933V120H934V121H935V120H936V121H937V121H938V122H939V121H940V121H941V121H942V120H943V121H944V124H945V121H946V121H947V121H948V120H949V121H950V121H951V123H952V120H953V121H954V121H955V121H956V121H957V121H958V122H959V120H960V121H961V120H962V121H963V121H964V118H965V119H966V118H967V118H968V118H969V119H970V118H971V119H972V118H973V118H974V118H975V118H976V119H977V117H978V118H979V119H980V118H981V118H982V119H983V117H984V118H985V119H986V118H987V117H988V118H989V118H990V117H991V118H992V118H993V118H994V118H995V119H996V118H997V118H998V118H999V119H1000V117H1001V119H1002V118H1003V118H1004V118H1005V118H1006V118H1007V119H1008V118H1009V118H1010V118H1011V119H1012V118H1013V118H1014V119H1015V118H1016V118H1017V119H1018V118H1019V119H1020V118H1021V118H1022V118H1023V118H1024V118H1025V118H1026V118H1027V118H1028V118H1029V118H1030V117H1031V119H1032V118H1033V118H1034V118H1035V118H1036V118H1037V118H1038V118H1039V118H1040V119H1041V118H1042V118H1043V118H1044V118H1045V119H1046V118H1047V119H1048V118H1049V119H1050V118H1051V118H1052V118H1053V118H1054V119H1055V118H1056V117H1057V119H1058V118H1059V118H1060V119H1061V118H1062V118H1063V118H1064V118H1065V118H1066V118H1067V118H1068V118H1069V118H1070V119H1071V118H1072V119H1073V119H1074V118H1075V118H1076V118H1077V118H1078V118H1079V118H1080V118H1081V119H1082V118H1083V118H1084V118H1085V118H1086V119H1087V119H1088V118H1089V119H1090V118H1091V117H1092V118H1093V117H1094V119H1095V118H1096V118H1097V119H1098V119H1099V119H1100V118H1101V118H1102V119H1103V118H1104V118H1105V118H1106V119H1107V118H1108V118H1109V118H1110V118H1111V118H1112V119H1113V119H1114V118H1115V118H1116V107H1117V107H1118V107H1119V107H1120V107H1121V107H1122V107H1123V107H1124V107H1125V107H1126V107H1127V107H1128V107H1129V107H1130V107H1131V107H1132V107H1133V107H1134V107H1135V107H1136V107H1137V107H1138V107H1139V107H1140V107H1141V107H1142V107H1143V107H1144V107H1145V107H1146V107H1147V107H1148V107H1149V107H1150V107H1151V107H1152V107H1153V107H1154V107H1155V107H1156V107H1157V107H1158V107H1159V107H1160V107H1161V107H1162V107H1163V107H1164V107H1165V107H1166V107H1167V107H1168V107H1169V107H1170V107H1171V107H1172V107H1173V107H1174V107H1175V107H1176V107H1177V107H1178V107H1179V107H1180V107H1181V107H1182V107H1183V107H1184V107H1185V107H1186V107H1187V107H1188V107H1189V107H1190V107H1191V107H1192V107H1193V107H1194V107H1195V107H1196V107H1197V107H1198V107H1199V107H1200V107H1201V107H1202V107H1203V107H1204V107H1205V107H1206V107H1207V107H1208V107H1209V107H1210V107H1211V107H1212V107H1213V107H1214V107H1215V107H1216V107H1217V107H1218V107H1219V107H1220V107H1221V107H1222V107H1223V107H1224V107H1225V107H1226V107H1227V107H1228V107H1229V107H1230V107H1231V107H1232V107H1233V107H1234V107H1235V107H1236V107H1237V107H1238V107H1239V107H1240V107H1241V107H1242V107H1243V107H1244V107H1245V107H1246V107H1247V107H1248V107H1249V107H1250V107H1251V107H1252V107H1253V107H1254V107H1255V107H1256V107H1257V107H1258V107H1259V107H1260V107H1261V107H1262V107H1263V107H1264V107H1265V107H1266V107H1267V107H1268V107H1269V107H1270V189H1269V188H1268V188H1267V200H1266V189H1265V189H1264V189H1263V188H1262V190H1261V193H1260V188H1259V190H1258V190H1257V189H1256V189H1255V190H1254V189H1253V197H1252V188H1251V189H1250V189H1249V188H1248V188H1247V187H1246V187H1245V188H1244V189H1243V190H1242V187H1241V190H1240V187H1239V189H1238V200H1237V193H1236V189H1235V187H1234V189H1233V189H1232V191H1231V194H1230V189H1229V189H1228V189H1227V189H1226V195H1225V197H1224V189H1223V187H1222V187H1221V188H1220V187H1219V188H1218V197H1217V190H1216V189H1215V197H1214V195H1213V189H1212V192H1211V189H1210V190H1209V187H1208V190H1207V188H1206V189H1205V188H1204V188H1203V188H1202V187H1201V189H1200V188H1199V187H1198V188H1197V188H1196V190H1195V187H1194V188H1193V189H1192V189H1191V194H1190V190H1189V190H1188V188H1187V189H1186V188H1185V188H1184V197H1183V189H1182V195H1181V194H1180V188H1179V190H1178V188H1177V188H1176V195H1175V188H1174V189H1173V189H1172V187H1171V187H1170V189H1169V188H1168V195H1167V188H1166V188H1165V190H1164V189H1163V188H1162V189H1161V189H1160V188H1159V188H1158V188H1157V189H1156V196H1155V188H1154V189H1153V188H1152V188H1151V189H1150V187H1149V188H1148V189H1147V195H1146V191H1145V190H1144V188H1143V188H1142V188H1141V188H1140V201H1139V188H1138V190H1137V189H1136V190H1135V193H1134V188H1133V196H1132V188H1131V188H1130V188H1129V194H1128V187H1127V189H1126V189H1125V194H1124V200H1123V188H1122V188H1121V189H1120V196H1119V189H1118V188H1117V188H1116V186H1115V186H1114V187H1113V186H1112V186H1111V187H1110V186H1109V186H1108V186H1107V188H1106V186H1105V186H1104V186H1103V187H1102V187H1101V186H1100V186H1099V187H1098V186H1097V187H1096V186H1095V187H1094V186H1093V187H1092V187H1091V186H1090V187H1089V187H1088V186H1087V186H1086V187H1085V186H1084V187H1083V186H1082V186H1081V187H1080V186H1079V188H1078V186H1077V186H1076V187H1075V186H1074V187H1073V187H1072V186H1071V186H1070V186H1069V186H1068V187H1067V186H1066V186H1065V187H1064V186H1063V186H1062V186H1061V187H1060V187H1059V187H1058V186H1057V186H1056V187H1055V187H1054V186H1053V186H1052V187H1051V187H1050V187H1049V186H1048V187H1047V186H1046V189H1045V187H1044V186H1043V186H1042V186H1041V186H1040V186H1039V186H1038V187H1037V187H1036V186H1035V188H1034V186H1033V187H1032V186H1031V188H1030V187H1029V187H1028V186H1027V186H1026V187H1025V186H1024V186H1023V186H1022V187H1021V186H1020V187H1019V186H1018V186H1017V186H1016V186H1015V186H1014V187H1013V186H1012V187H1011V186H1010V187H1009V187H1008V186H1007V186H1006V186H1005V186H1004V186H1003V187H1002V186H1001V186H1000V186H999V186H998V186H997V186H996V187H995V187H994V186H993V187H992V186H991V186H990V186H989V187H988V187H987V187H986V186H985V186H984V186H983V186H982V186H981V186H980V186H979V187H978V187H977V187H976V187H975V186H974V186H973V186H972V186H971V186H970V189H969V186H968V186H967V187H966V186H965V187H964V186H963V186H962V186H961V187H960V186H959V187H958V187H957V186H956V186H955V188H954V186H953V186H952V186H951V186H950V186H949V186H948V186H947V187H946V186H945V186H944V186H943V187H942V187H941V187H940V186H939V187H938V186H937V186H936V186H935V187H934V187H933V186H932V186H931V186H930V187H929V186H928V188H927V186H926V187H925V186H924V187H923V186H922V187H921V186H920V186H919V186H918V186H917V186H916V187H915V186H914V186H913V186H912V189H911V188H910V187H909V186H908V186H907V187H906V187H905V186H904V187H903V187H902V186H901V187H900V186H899V186H898V186H897V186H896V186H895V187H894V186H893V186H892V186H891V187H890V187H889V186H888V186H887V187H886V187H885V186H884V187H883V186H882V186H881V187H880V186H879V187H878V186H877V195H876V189H875V189H874V192H873V194H872V189H871V189H870V187H869V189H868V192H867V189H866V188H865V196H864V188H863V187H862V188H861V190H860V198H859V190H858V189H857V187H856V189H855V190H854V188H853V188H852V187H851V198H850V190H849V198H848V187H847V189H846V190H845V187H844V189H843V194H842V190H841V189H840V189H839V193H838V190H837V189H836V195H835V187H834V197H833V187H832V194H831V196H830V187H829V188H828V189H827V188H826V189H825V189H824V190H823V187H822V189H821V188H820V189H819V189H818V189H817V187H816V189H815V198H814V200H813V188H812V188H811V188H810V189H809V196H808V189H807V187H806V188H805V189H804V189H803V188H802V201H801V200H800V187H799V189H798V191H797V200H796V190H795V189H794V188H793V190H792V188H791V194H790V194H789V189H788V188H787V188H786V188H785V189H784V188H783V197H782V189H781V187H780V189H779V190H778V188H777V189H776V189H775V198H774V197H773V189H772V190H771V188H770V190H769V188H768V188H767V189H766V200H765V190H764V188H763V188H762V189H761V189H760V197H759V188H758V190H757V195H756V187H755V188H754V195H753V190H752V188H751V188H750V189H749V189H748V193H747V190H746V188H745V187H744V190H743V192H742V190H741V188H740V189H739V190H738V187H737V188H736V197H735V188H734V189H733V199H732V194H731V198H730V190H729V187H728V188H727V188H726V189H725V188H724V192H723V190H722V188H721V194H720V190H719V190H718V189H717V195H716V188H715V189H714V189H713V189H712V190H711V188H710V190H709V195H708V189H707V187H706V188H705V189H704V189H703V187H702V190H701V190H700V188H699V187H698V189H697V187H696V187H695V189H694V189H693V187H692V189H691V197H690V190H689V201H688V190H687V187H686V188H685V196H684V188H683V190H682V195H681V189H680V188H679V188H678V189H677V189H676V188H675V194H674V192H673V188H672V189H671V189H670V189H669V190H668V190H667V187H666V190H665V188H664V187H663V189H662V187H661V187H660V189H659V189H658V188H657V188H656V188H655V190H654V187H653V189H652V187H651V187H650V188H649V188H648V200H647V188H646V187H645V193H644V198H643V187H642V190H641V190H640V189H639V190H638V188H637V187H636V187H635V186H634V186H633V186H632V186H631V186H630V186H629V186H628V186H627V186H626V186H625V186H624V187H623V186H622V186H621V186H620V187H619V189H618V186H617V187H616V186H615V187H614V188H613V186H612V186H611V186H610V186H609V186H608V186H607V187H606V186H605V186H604V187H603V187H602V186H601V186H600V186H599V186H598V187H597V186H596V186H595V187H594V186H593V186H592V188H591V186H590V186H589V187H588V187H587V186H586V187H585V186H584V187H583V186H582V186H581V186H580V187H579V186H578V187H577V186H576V187H575V186H574V186H573V187H572V186H571V186H570V186H569V186H568V186H567V186H566V186H565V186H564V187H563V187H562V186H561V187H560V189H559V186H558V186H557V186H556V186H555V186H554V186H553V187H552V187H551V186H550V186H549V186H548V186H547V188H546V186H545V186H544V186H543V186H542V187H541V186H540V190H539V186H538V187H537V186H536V186H535V186H534V187H533V187H532V186H531V186H530V186H529V187H528V187H527V187H526V186H525V186H524V186H523V190H522V187H521V187H520V186H519V186H518V187H517V187H516V186H515V187H514V187H513V186H512V186H511V187H510V186H509V186H508V186H507V186H506V187H505V187H504V186H503V186H502V186H501V186H500V187H499V186H498V187H497V186H496V186H495V186H494V187H493V188H492V186H491V186H490V187H489V187H488V186H487V186H486V187H485V186H484V186H483V186H482V186H481V186H480V186H479V187H478V187H477V186H476V187H475V187H474V187H473V186H472V186H471V188H470V187H469V186H468V186H467V186H466V187H465V187H464V186H463V186H462V187H461V186H460V187H459V186H458V186H457V187H456V186H455V187H454V186H453V187H452V186H451V186H450V186H449V186H448V187H447V186H446V187H445V186H444V186H443V187H442V186H441V186H440V186H439V186H438V187H437V186H436V186H435V187H434V187H433V186H432V187H431V186H430V186H429V186H428V186H427V187H426V186H425V186H424V186H423V187H422V186H421V187H420V187H419V186H418V187H417V186H416V186H415V186H414V186H413V186H412V186H411V187H410V186H409V188H408V186H407V186H406V186H405V186H404V187H403V187H402V186H401V186H400V187H399V186H398V187H397V189H396V188H395V189H394V188H393V188H392V189H391V188H390V189H389V192H388V188H387V188H386V190H385V193H384V189H383V188H382V189H381V187H380V189H379V194H378V189H377V188H376V198H375V190H374V187H373V199H372V190H371V188H370V189H369V188H368V189H367V187H366V187H365V190H364V188H363V190H362V188H361V188H360V190H359V190H358V188H357V189H356V188H355V190H354V190H353V188H352V189H351V189H350V189H349V193H348V188H347V189H346V189H345V192H344V187H343V202H342V200H341V189H340V188H339V188H338V198H337V188H336V191H335V190H334V189H333V189H332V187H331V193H330V187H329V189H328V188H327V187H326V189H325V190H324V189H323V188H322V196H321V188H320V189H319V188H318V187H317V193H316V189H315V190H314V196H313V189H312V190H311V187H310V190H309V189H308V188H307V188H306V188H305V188H304V188H303V188H302V189H301V188H300V189H299V195H298V189H297V189H296V188H295V197H294V190H293V187H292V189H291V187H290V188H289V188H288V189H287V189H286V189H285V188H284V188H283V197H282V192H281V198H280V187H279V189H278V196H277V189H276V189H275V189H274V188H273V189H272V190H271V187H270V188H269V199H268V189H267V188H266V187H265V189H264V188H263V197H262V195H261V201H260V191H259V187H258V187H257V188H256V190H255V188H254V194H253V187H252V198H251V189H250V194H249V187H248V199H247V189H246V193H245V188H244V188H243V189H242V189H241V193H240V194H239V188H238V187H237V190H236V194H235V196H234V189H233V187H232V189H231V188H230V188H229V187H228V189H227V189H226V193H225V187H224V190H223V188H222V188H221V187H220V188H219V188H218V200H217V188H216V187H215V187H214V188H213V190H212V188H211V190H210V187H209V192H208V189H207V189H206V188H205V188H204V190H203V188H202V188H201V195H200V194H199V189H198V190H197V189H196V189H195V194H194V188H193V189H192V192H191V187H190V187H189V189H188V189H187V196H186V189H185V194H184V199H183V188H182V189H181V188H180V188H179V189H178V189H177V188H176V188H175V190H174V188H173V188H172V190H171V189H170V189H169V188H168V195H167V188H166V197H165V188H164V196H163V198H162V197H161V188H160V199H159V187H158V188H157V187H156V186H155V186H154V186H153V186H152V187H151V187H150V187H149V187H148V186H147V186H146V186H145V186H144V186H143V186H142V186H141V186H140V186H139V187H138V186H137V186H136V187H135V186H134V186H133V187H132V186H131V188H130V186H129V186H128V186H127V186H126V187H125V186H124V186H123V186H122V186H121V186H120V186H119V186H118V187H117V186H116V186H115V188H114V186H113V186H112V187H111V186H110V186H109V186H108V187H107V186H106V187H105V187H104V186H103V189H102V187H101V186H100V186H99V186H98V187H97V186H96V186H95V186H94V187H93V187H92V187H91V186H90V186H89V186H88V187H87V187H86V186H85V186H84V186H83V186H82V187H81V186H80V187H79V186H78V186H77V186H76V188H75V186H74V187H73V187H72V187H71V186H70Z" fill="#80003f"/><path d="M70,209V209H71V208H72V209H73V209H74V209H75V209H76V208H77V209H78V209H79V209H80V208H81V209H82V209H83V209H84V209H85V209H86V209H87V209H88V209H89V209H90V209H91V209H92V209H93V209H94V209H95V209H96V209H97V209H98V208H99V209H100V209H101V209H102V209H103V208H104V209H105V208H106V209H107V209H108V209H109V209H110V209H111V209H112V208H113V209H114V209H115V209H116V209H117V209H118V208H119V209H120V209H121V209H122V208H123V209H124V209H125V209H126V209H127V209H128V209H129V208H130V209H131V209H132V209H133V209H134V208H135V209H136V208H137V209H138V209H139V208H140V209H141V209H142V209H143V209H144V209H145V209H146V209H147V209H148V209H149V209H150V208H151V209H152V209H153V209H154V209H155V209H156V203H157V217H158V219H159V219H160V219H161V220H162V220H163V220H164V221H165V221H166V221H167V221H168V221H169V221H170V221H171V221H172V221H173V221H174V221H175V221H176V222H177V221H178V221H179V222H180V221H181V221H182V222H183V221H184V221H185V221H186V221H187V221H188V221H189V222H190V221H191V222H192V221H193V221H194V221H195V221H196V221H197V221H198V221H199V221H200V221H201V221H202V222H203V222H204V221H205V221H206V222H207V222H208V221H209V222H210V221H211V222H212V221H213V221H214V221H215V221H216V221H217V221H218V221H219V221H220V221H221V221H222V221H223V221H224V221H225V222H226V221H227V222H228V221H229V221H230V221H231V221H232V221H233V221H234V221H235V221H236V221H237V221H238V221H239V222H240V221H241V221H242V222H243V221H244V222H245V221H246V221H247V221H248V222H249V221H250V222H251V221H252V221H253V221H254V221H255V221H256V221H257V222H258V221H259V221H260V221H261V222H262V221H263V221H264V221H265V221H266V221H267V221H268V222H269V221H270V221H271V222H272V221H273V221H274V222H275V221H276V221H277V221H278V222H279V221H280V221H281V221H282V221H283V221H284V221H285V221H286V221H287V221H288V221H289V222H290V222H291V221H292V221H293V221H294V221H295V221H296V221H297V221H298V221H299V221H300V222H301V222H302V221H303V221H304V221H305V221H306V222H307V221H308V221H309V221H310V222H311V222H312V221H313V222H314V221H315V221H316V221H317V221H318V221H319V221H320V221H321V221H322V221H323V221H324V221H325V221H326V221H327V221H328V222H329V222H330V222H331V221H332V222H333V222H334V222H335V221H336V222H337V221H338V221H339V221H340V221H341V221H342V221H343V221H344V222H345V221H346V221H347V221H348V221H349V221H350V221H351V222H352V221H353V221H354V221H355V221H356V222H357V222H358V222H359V221H360V221H361V222H362V222H363V221H364V221H365V221H366V221H367V221H368V221H369V221H370V221H371V221H372V221H373V221H374V221H375V221H376V221H377V222H378V221H379V221H380V221H381V221H382V221H383V222H384V221H385V221H386V221H387V221H388V221H389V221H390V221H391V221H392V221H393V221H394V221H395V221H396V221H397V230H398V235H399V238H400V239H401V239H402V239H403V239H404V239H405V239H406V239H407V239H408V239H409V239H410V239H411V239H412V239H413V239H414V239H415V239H416V239H417V239H418V239H419V239H420V239H421V239H422V239H423V239H424V239H425V239H426V239H427V239H428V239H429V239H430V239H431V239H432V239H433V239H434V239H435V239H436V239H437V239H438V239H439V239H440V239H441V239H442V239H443V239H444V239H445V239H446V239H447V239H448V239H449V239H450V239H451V239H452V239H453V239H454V239H455V239H456V239H457V239H458V239H459V239H460V239H461V239H462V239H463V239H464V239H465V239H466V239H467V239H468V239H469V239H470V239H471V239H472V239H473V239H474V239H475V239H476V239H477V239H478V239H479V239H480V239H481V239H482V239H483V239H484V208H485V209H486V209H487V209H488V208H489V209H490V209H491V208H492V208H493V208H494V209H495V209H496V208H497V209H498V209H499V209H500V209H501V209H502V209H503V209H504V209H505V209H506V209H507V208H508V209H509V209H510V209H511V209H512V209H513V208H514V209H515V209H516V209H517V209H518V209H519V209H520V209H521V209H522V209H523V209H524V208H525V208H526V208H527V209H528V208H529V209H530V208H531V209H532V209H533V208H534V209H535V208H536V209H537V208H538V209H539V209H540V209H541V209H542V209H543V209H544V209H545V209H546V208H547V209H548V209H549V208H550V209H551V209H552V209H553V208H554V209H555V209H556V209H557V208H558V209H559V208H560V209H561V209H562V208H563V209H564V209H565V209H566V209H567V208H568V209H569V209H570V209H571V209H572V209H573V209H574V209H575V209H576V208H577V209H578V208H579V209H580V208H581V209H582V209H583V209H584V209H585V208H586V209H587V209H588V209H589V209H590V208H591V208H592V209H593V209H594V208H595V209H596V209H597V209H598V209H599V209H600V209H601V208H602V209H603V209H604V209H605V209H606V209H607V208H608V208H609V209H610V209H611V208H612V209H613V209H614V209H615V209H616V208H617V209H618V209H619V209H620V208H621V209H622V209H623V208H624V209H625V209H626V209H627V209H628V209H629V209H630V209H631V209H632V209H633V208H634V209H635V209H636V203H637V217H638V219H639V220H640V219H641V220H642V220H643V220H644V222H645V222H646V222H647V221H648V221H649V221H650V222H651V222H652V221H653V221H654V221H655V221H656V221H657V221H658V221H659V221H660V221H661V221H662V221H663V221H664V221H665V221H666V221H667V222H668V221H669V221H670V222H671V221H672V222H673V221H674V221H675V221H676V221H677V221H678V222H679V221H680V221H681V222H682V221H683V222H684V221H685V221H686V221H687V221H688V222H689V222H690V221H691V221H692V221H693V221H694V222H695V221H696V221H697V222H698V222H699V222H700V221H701V221H702V222H703V222H704V221H705V221H706V221H707V221H708V221H709V221H710V221H711V221H712V222H713V221H714V221H715V222H716V221H717V222H718V221H719V221H720V221H721V221H722V221H723V221H724V221H725V221H726V221H727V221H728V222H729V222H730V221H731V221H732V221H733V221H734V221H735V221H736V221H737V221H738V222H739V221H740V221H741V221H742V221H743V221H744V221H745V222H746V221H747V222H748V221H749V221H750V221H751V221H752V221H753V222H754V221H755V221H756V221H757V221H758V222H759V221H760V222H761V222H762V221H763V221H764V221H765V221H766V222H767V222H768V221H769V221H770V221H771V221H772V221H773V221H774V221H775V221H776V221H777V221H778V221H779V222H780V221H781V221H782V221H783V221H784V221H785V222H786V221H787V221H788V221H789V221H790V221H791V221H792V221H793V222H794V221H795V221H796V221H797V221H798V221H799V221H800V221H801V221H802V221H803V221H804V221H805V221H806V221H807V222H808V221H809V221H810V221H811V221H812V221H813V221H814V222H815V221H816V221H817V221H818V222H819V221H820V221H821V221H822V222H823V221H824V221H825V221H826V222H827V221H828V221H829V221H830V221H831V221H832V221H833V221H834V221H835V221H836V221H837V222H838V221H839V221H840V222H841V221H842V221H843V222H844V221H845V222H846V221H847V221H848V221H849V221H850V222H851V221H852V221H853V221H854V222H855V222H856V221H857V221H858V221H859V221H860V222H861V221H862V221H863V221H864V221H865V221H866V221H867V222H868V222H869V222H870V221H871V221H872V221H873V221H874V221H875V221H876V221H877V230H878V235H879V238H880V239H881V239H882V239H883V239H884V239H885V239H886V239H887V239H888V239H889V239H890V239H891V239H892V239H893V239H894V239H895V239H896V239H897V239H898V239H899V239H900V239H901V239H902V239H903V239H904V239H905V239H906V239H907V239H908V239H909V239H910V239H911V239H912V239H913V239H914V239H915V239H916V239H917V239H918V239H919V239H920V239H921V239H922V239H923V239H924V239H925V239H926V239H927V239H928V239H929V239H930V239H931V239H932V239H933V239H934V239H935V239H936V239H937V239H938V239H939V239H940V239H941V239H942V239H943V239H944V239H945V239H946V239H947V239H948V239H949V239H950V239H951V239H952V239H953V239H954V239H955V239H956V239H957V239H958V239H959V239H960V239H961V239H962V239H963V239H964V208H965V208H966V209H967V209H968V209H969V208H970V209H971V209H972V209H973V209H974V208H975V209H976V208H977V208H978V209H979V209H980V209H981V208H982V209H983V208H984V209H985V209H986V209H987V209H988V209H989V209H990V209H991V209H992V209H993V208H994V208H995V209H996V209H997V208H998V209H999V209H1000V209H1001V209H1002V209H1003V209H1004V209H1005V208H1006V209H1007V209H1008V209H1009V209H1010V209H1011V209H1012V209H1013V209H1014V209H1015V208H1016V208H1017V209H1018V208H1019V209H1020V209H1021V209H1022V209H1023V209H1024V209H1025V209H1026V209H1027V209H1028V209H1029V209H1030V208H1031V209H1032V209H1033V209H1034V208H1035V208H1036V209H1037V209H1038V209H1039V208H1040V208H1041V208H1042V209H1043V209H1044V208H1045V209H1046V209H1047V209H1048V209H1049V208H1050V209H1051V209H1052V209H1053V209H1054V208H1055V209H1056V209H1057V209H1058V208H1059V209H1060V209H1061V209H1062V208H1063V209H1064V209H1065V208H1066V209H1067V209H1068V209H1069V208H1070V209H1071V209H1072V209H1073V209H1074V208H1075V208H1076V209H1077V209H1078V209H1079V209H1080V209H1081V209H1082V209H1083V209H1084V209H1085V208H1086V209H1087V209H1088V209H1089V209H1090V209H1091V209H1092V208H1093V208H1094V209H1095V209H1096V209H1097V209H1098V209H1099V208H1100V208H1101V208H1102V209H1103V209H1104V209H1105V209H1106V209H1107V209H1108V209H1109V209H1110V209H1111V208H1112V209H1113V209H1114V209H1115V209H1116V204H1117V217H1118V219H1119V219H1120V219H1121V221H1122V220H1123V220H1124V221H1125V222H1126V221H1127V221H1128V222H1129V221H1130V222H1131V221H1132V221H1133V221H1134V221H1135V221H1136V221H1137V221H1138V221H1139V221H1140V221H1141V221H1142V222H1143V221H1144V221H1145V221H1146V221H1147V222H1148V221H1149V221H1150V221H1151V222H1152V221H1153V221H1154V222H1155V221H1156V221H1157V221H1158V221H1159V221H1160V221H1161V221H1162V221H1163V221H1164V221H1165V221H1166V221H1167V221H1168V221H1169V221H1170V221H1171V221H1172V222H1173V221H1174V221H1175V221H1176V221H1177V222H1178V221H1179V221H1180V221H1181V221H1182V222H1183V221H1184V221H1185V221H1186V221H1187V221H1188V221H1189V222H1190V221H1191V222H1192V222H1193V221H1194V221H1195V221H1196V221H1197V221H1198V222H1199V221H1200V222H1201V221H1202V221H1203V221H1204V222H1205V221H1206V221H1207V221H1208V221H1209V221H1210V221H1211V221H1212V221H1213V221H1214V221H1215V221H1216V221H1217V222H1218V221H1219V221H1220V221H1221V222H1222V221H1223V221H1224V221H1225V221H1226V221H1227V222H1228V221H1229V221H1230V221H1231V221H1232V221H1233V222H1234V221H1235V221H1236V221H1237V222H1238V221H1239V221H1240V221H1241V221H1242V221H1243V221H1244V221H1245V221H1246V221H1247V221H1248V221H1249V221H1250V222H1251V221H1252V221H1253V221H1254V222H1255V222H1256V221H1257V221H1258V221H1259V221H1260V221H1261V222H1262V221H1263V221H1264V222H1265V221H1266V221H1267V221H1268V222H1269V221H1270V246H1269V246H1268V247H1267V246H1266V246H1265V247H1264V246H1263V246H1262V246H1261V246H1260V246H1259V247H1258V246H1257V246H1256V247H1255V246H1254V247H1253V246H1252V247H1251V246H1250V246H1249V247H1248V246H1247V246H1246V247H1245V246H1244V246H1243V246H1242V247H1241V246H1240V246H1239V246H1238V246H1237V246H1236V247H1235V246H1234V246H1233V246H1232V247H1231V246H1230V247H1229V247H1228V247H1227V246H1226V247H1225V246H1224V246H1223V246H1222V246H1221V247H1220V246H1219V247H1218V246H1217V246H1216V246H1215V246H1214V246H1213V246H1212V246H1211V246H1210V246H1209V246H1208V246H1207V246H1206V246H1205V246H1204V246H1203V246H1202V246H1201V247H1200V247H1199V246H1198V246H1197V246H1196V247H1195V246H1194V246H1193V246H1192V247H1191V246H1190V247H1189V246H1188V246H1187V246H1186V246H1185V246H1184V246H1183V246H1182V247H1181V247H1180V246H1179V246H1178V246H1177V246H1176V247H1175V246H1174V246H1173V246H1172V246H1171V247H1170V246H1169V246H1168V246H1167V247H1166V247H1165V247H1164V246H1163V247H1162V246H1161V246H1160V247H1159V246H1158V246H1157V246H1156V246H1155V246H1154V246H1153V247H1152V247H1151V247H1150V247H1149V247H1148V247H1147V247H1146V247H1145V247H1144V247H1143V247H1142V247H1141V247H1140V248H1139V247H1138V248H1137V249H1136V249H1135V248H1134V248H1133V248H1132V249H1131V249H1130V249H1129V249H1128V250H1127V250H1126V250H1125V251H1124V251H1123V251H1122V252H1121V252H1120V253H1119V254H1118V254H1117V255H1116V233H1115V232H1114V232H1113V232H1112V232H1111V232H1110V232H1109V232H1108V232H1107V232H1106V233H1105V233H1104V232H1103V232H1102V233H1101V232H1100V232H1099V232H1098V232H1097V232H1096V233H1095V232H1094V233H1093V232H1092V233H1091V232H1090V233H1089V232H1088V232H1087V232H1086V232H1085V232H1084V232H1083V233H1082V232H1081V232H1080V232H1079V232H1078V232H1077V233H1076V232H1075V232H1074V232H1073V232H1072V233H1071V232H1070V233H1069V232H1068V232H1067V232H1066V232H1065V232H1064V232H1063V232H1062V233H1061V232H1060V232H1059V233H1058V232H1057V232H1056V233H1055V232H1054V232H1053V232H1052V232H1051V233H1050V232H1049V232H1048V233H1047V232H1046V232H1045V232H1044V232H1043V232H1042V232H1041V233H1040V232H1039V232H1038V233H1037V232H1036V232H1035V232H1034V232H1033V233H1032V232H1031V233H1030V233H1029V232H1028V232H1027V232H1026V233H1025V232H1024V232H1023V232H1022V232H1021V233H1020V232H1019V232H1018V232H1017V233H1016V233H1015V232H1014V233H1013V232H1012V233H1011V233H1010V232H1009V232H1008V232H1007V233H1006V232H1005V233H1004V232H1003V232H1002V233H1001V232H1000V233H999V232H998V232H997V232H996V232H995V233H994V232H993V232H992V232H991V232H990V232H989V232H988V232H987V232H986V232H985V232H984V232H983V232H982V232H981V232H980V232H979V232H978V232H977V232H976V232H975V232H974V232H973V232H972V233H971V233H970V232H969V233H968V232H967V232H966V232H965V232H964V241H963V242H962V241H961V242H960V241H959V241H958V241H957V241H956V242H955V242H954V242H953V241H952V241H951V241H950V241H949V241H948V241H947V241H946V242H945V241H944V241H943V241H942V241H941V241H940V241H939V241H938V241H937V241H936V241H935V242H934V241H933V242H932V241H931V241H930V241H929V241H928V241H927V241H926V241H925V241H924V242H923V241H922V241H921V241H920V241H919V241H918V241H917V241H916V241H915V241H914V241H913V242H912V242H911V242H910V241H909V242H908V241H907V241H906V242H905V241H904V241H903V241H902V241H901V241H900V241H899V242H898V241H897V241H896V241H895V241H894V241H893V242H892V241H891V242H890V241H889V241H888V241H887V241H886V241H885V241H884V241H883V242H882V242H881V241H880V244H879V250H878V254H877V246H876V246H875V246H874V246H873V246H872V246H871V246H870V246H869V246H868V246H867V247H866V246H865V246H864V246H863V246H862V246H861V247H860V247H859V247H858V247H857V246H856V247H855V246H854V246H853V246H852V246H851V246H850V247H849V246H848V246H847V247H846V247H845V246H844V246H843V246H842V246H841V247H840V247H839V246H838V246H837V246H836V246H835V246H834V246H833V246H832V246H831V246H830V246H829V247H828V247H827V246H826V246H825V246H824V246H823V247H822V246H821V247H820V246H819V246H818V247H817V246H816V246H815V246H814V246H813V246H812V246H811V247H810V246H809V246H808V246H807V247H806V246H805V246H804V246H803V246H802V246H801V246H800V247H799V246H798V246H797V246H796V246H795V246H794V246H793V246H792V246H791V246H790V247H789V246H788V246H787V247H786V246H785V247H784V247H783V246H782V246H781V246H780V246H779V246H778V247H777V246H776V246H775V246H774V246H773V246H772V246H771V246H770V246H769V246H768V246H767V246H766V246H765V246H764V246H763V247H762V246H761V246H760V246H759V246H758V247H757V246H756V247H755V246H754V247H753V246H752V247H751V246H750V246H749V247H748V246H747V247H746V247H745V247H744V246H743V247H742V246H741V246H740V247H739V246H738V246H737V246H736V246H735V246H734V247H733V246H732V246H731V247H730V246H729V246H728V247H727V246H726V246H725V247H724V247H723V246H722V246H721V246H720V246H719V246H718V246H717V247H716V246H715V246H714V246H713V247H712V246H711V246H710V246H709V246H708V247H707V246H706V246H705V246H704V246H703V246H702V246H701V246H700V246H699V246H698V247H697V246H696V246H695V246H694V246H693V246H692V246H691V246H690V247H689V246H688V247H687V246H686V246H685V246H684V246H683V246H682V247H681V247H680V246H679V246H678V246H677V246H676V246H675V246H674V246H673V246H672V247H671V247H670V247H669V247H668V247H667V247H666V247H665V248H664V247H663V247H662V247H661V247H660V247H659V247H658V249H657V248H656V248H655V248H654V248H653V248H652V250H651V249H650V250H649V250H648V251H647V251H646V250H645V251H644V251H643V251H642V252H641V252H640V254H639V254H638V255H637V256H636V232H635V232H634V232H633V232H632V232H631V232H630V232H629V233H628V233H627V232H626V232H625V232H624V232H623V232H622V233H621V232H620V232H619V232H618V233H617V232H616V232H615V232H614V232H613V233H612V233H611V233H610V232H609V233H608V232H607V232H606V232H605V232H604V232H603V233H602V233H601V232H600V233H599V233H598V232H597V232H596V232H595V232H594V233H593V232H592V232H591V232H590V232H589V232H588V232H587V232H586V232H585V233H584V233H583V233H582V233H581V232H580V233H579V233H578V232H577V233H576V232H575V233H574V232H573V232H572V232H571V232H570V233H569V232H568V232H567V232H566V232H565V233H564V232H563V232H562V232H561V233H560V232H559V232H558V232H557V232H556V232H555V232H554V233H553V233H552V232H551V233H550V232H549V232H548V232H547V232H546V232H545V232H544V233H543V233H542V233H541V232H540V232H539V232H538V233H537V232H536V233H535V232H534V232H533V232H532V232H531V232H530V232H529V232H528V232H527V232H526V232H525V232H524V232H523V232H522V232H521V232H520V232H519V232H518V233H517V232H516V233H515V232H514V232H513V233H512V232H511V233H510V232H509V233H508V233H507V232H506V232H505V232H504V232H503V232H502V232H501V232H500V233H499V233H498V232H497V232H496V232H495V232H494V233H493V232H492V233H491V232H490V232H489V232H488V232H487V232H486V232H485V232H484V241H483V241H482V241H481V241H480V241H479V241H478V241H477V241H476V241H475V241H474V241H473V241H472V241H471V241H470V241H469V242H468V241H467V241H466V241H465V242H464V241H463V241H462V241H461V241H460V242H459V241H458V242H457V241H456V242H455V241H454V241H453V241H452V241H451V241H450V241H449V241H448V241H447V241H446V241H445V241H444V241H443V241H442V241H441V241H440V241H439V241H438V241H437V241H436V241H435V241H434V241H433V241H432V241H431V241H430V241H429V241H428V241H427V241H426V241H425V241H424V241H423V241H422V242H421V241H420V241H419V241H418V241H417V242H416V241H415V241H414V241H413V241H412V241H411V241H410V241H409V241H408V241H407V241H406V241H405V241H404V241H403V241H402V242H401V241H400V244H399V250H398V254H397V246H396V246H395V246H394V246H393V246H392V246H391V246H390V246H389V246H388V246H387V246H386V247H385V246H384V246H383V247H382V246H381V246H380V246H379V247H378V246H377V247H376V246H375V246H374V246H373V246H372V246H371V246H370V246H369V246H368V247H367V246H366V246H365V247H364V246H363V246H362V246H361V246H360V246H359V246H358V246H357V246H356V246H355V246H354V246H353V247H352V247H351V246H350V246H349V246H348V246H347V246H346V246H345V246H344V246H343V246H342V246H341V247H340V246H339V246H338V246H337V246H336V246H335V247H334V246H333V246H332V247H331V246H330V246H329V247H328V246H327V246H326V246H325V246H324V246H323V246H322V246H321V247H320V246H319V246H318V246H317V246H316V246H315V247H314V246H313V246H312V247H311V246H310V247H309V246H308V246H307V246H306V246H305V247H304V247H303V247H302V246H301V247H300V247H299V246H298V246H297V246H296V246H295V246H294V246H293V246H292V246H291V246H290V246H289V246H288V247H287V246H286V247H285V246H284V247H283V246H282V246H281V246H280V246H279V246H278V246H277V246H276V246H275V247H274V246H273V246H272V246H271V246H270V246H269V246H268V247H267V246H266V246H265V246H264V247H263V246H262V247H261V246H260V246H259V246H258V247H257V246H256V246H255V247H254V246H253V247H252V247H251V246H250V246H249V247H248V246H247V246H246V246H245V246H244V247H243V246H242V247H241V246H240V246H239V247H238V246H237V246H236V246H235V246H234V246H233V247H232V247H231V246H230V246H229V246H228V246H227V246H226V246H225V246H224V246H223V247H222V246H221V247H220V247H219V246H218V247H217V247H216V246H215V246H214V247H213V246H212V246H211V246H210V246H209V247H208V246H207V247H206V247H205V247H204V246H203V246H202V246H201V246H200V246H199V246H198V246H197V246H196V247H195V246H194V246H193V246H192V247H191V247H190V247H189V248H188V248H187V247H186V247H185V247H184V247H183V247H182V248H181V248H180V248H179V248H178V248H177V248H176V248H175V248H174V248H173V248H172V250H171V250H170V249H169V249H168V251H167V250H166V250H165V251H164V252H163V252H162V252H161V252H160V254H159V254H158V254H157V255H156V232H155V232H154V233H153V232H152V233H151V232H150V232H149V233H148V233H147V233H146V233H145V232H144V232H143V232H142V232H141V233H140V232H139V232H138V233H137V232H136V232H135V233H134V232H133V232H132V232H131V232H130V232H129V232H128V232H127V233H126V232H125V233H124V233H123V232H122V232H121V232H120V232H119V233H118V232H117V232H116V232H115V232H114V232H113V232H112V232H111V232H110V232H109V233H108V233H107V232H106V232H105V232H104V232H103V232H102V232H101V232H100V232H99V232H98V232H97V232H96V232H95V232H94V232H93V232H92V232H91V232H90V232H89V232H88V232H87V233H86V232H85V232H84V232H83V232H82V232H81V233H80V232H79V232H78V232H77V233H76V232H75V232H74V233H73V232H72V233H71V232H70Z" fill="#808000"/><rect x="962" y="126" width="3" height="56" fill="#ff0080"/><line x1="964" y1="38" x2="964" y2="317" stroke="#fff" stroke-width="2" stroke-dasharray="18 6"/><line x1="965" y1="38" x2="965" y2="317" stroke="#fff" stroke-width="1" stroke-dasharray="18 6" transform="translate(0.5,0)"/><path shape-rendering="geometricPrecision" d="M959.0,119.5 L964.5,126 L970.0,119.5 H966.0 V112 H963.0 V119.5 Z" fill="#fff"/><path shape-rendering="geometricPrecision" d="M959.0,187.5 L964.5,181 L970.0,187.5 H966.0 V195 H963.0 V187.5 Z" fill="#fff"/><path shape-rendering="geometricPrecision" d="M959.0,217.5 L964.5,211 L970.0,217.5 H966.0 V225 H963.0 V217.5 Z" fill="#fff"/><path shape-rendering="geometricPrecision" d="M959.0,230.5 L964.5,237 L970.0,230.5 H966.0 V223 H963.0 V230.5 Z" fill="#fff"/><path d="M636.5,330 L640.5,337 L632.5,337 Z" fill="#ffff00"/><path d="M1272,162 L1279,158 L1279,166 Z" fill="#ffff00"/><path d="M1272,214 L1279,210 L1279,218 Z" fill="#ffff00"/><path d="M70,623h174M244,624h9M253,623h178M431,622h17M448,621h14M462,620h10M472,619h9M481,618h8M489,617h8M497,616h6M503,615h7M510,614h7M517,613h8M525,612h6M531,611h6M537,610h6M543,609h7M550,608h5M555,607h5M560,606h4M564,605h5M569,604h4M573,603h5M578,602h5M583,601h5M588,600h5M593,599h5M598,598h5M603,597h5M608,596h5M613,595h5M618,594h5M623,593h5M628,592h5M633,591h5M638,590h5M643,589h5M648,588h5M653,587h6M659,586h6M665,585h6M671,584h5M676,583h6M682,582h5M687,581h6M693,580h5M698,579h6M704,578h6M710,577h7M717,576h7M724,575h11M735,574h20M755,573h28M783,574h11M794,575h12M806,576h13M819,577h10M829,578h6M835,579h7M842,580h6M848,581h7M855,582h5M860,583h5M865,584h5M870,585h4M874,586h5M879,587h4M883,588h5M888,589h4M892,590h4M896,591h4M900,592h5M905,593h4M909,594h3M912,595h4M916,596h3M919,597h4M923,598h3M926,599h4M930,600h3M933,601h5M938,602h4M942,603h5M947,604h5M952,605h6M958,606h5M963,607h6M969,608h6M975,609h7M982,610h8M990,611h10M1000,612h13M1013,613h12M1025,612h20M1045,611h22M1067,610h12M1079,609h10M1089,608h9M1098,607h8M1106,606h9M1115,605h9M1124,604h8M1132,603h6M1138,602h5M1143,601h5M1148,600h5M1153,599h6M1159,598h6M1165,597h5M1170,596h6M1176,595h4M1180,594h5M1185,593h4M1189,592h4M1193,591h5M1198,590h5M1203,589h6M1209,588h6M1215,587h6M1221,586h5M1226,585h4M1230,584h5M1235,583h6M1241,582h6M1247,581h6M1253,580h8M1261,579h9" transform="translate(0,0.5)" fill="none" stroke="#ffff00" stroke-width="1"/><rect x="71" y="510" width="1198" height="1" fill="#ff0080"/><rect x="80" y="427" width="1" height="83" fill="#ff0080"/><rect x="79" y="497" width="1" height="13" fill="#ff0080"/><rect x="81" y="487" width="1" height="24" fill="#ff0080"/><rect x="81" y="510" width="2" height="2" fill="#ff0080"/><rect x="106" y="431" width="1" height="79" fill="#ff0080"/><rect x="105" y="497" width="1" height="13" fill="#ff0080"/><rect x="107" y="487" width="1" height="24" fill="#ff0080"/><rect x="107" y="510" width="2" height="2" fill="#ff0080"/><rect x="132" y="434" width="1" height="76" fill="#ff0080"/><rect x="131" y="497" width="1" height="13" fill="#ff0080"/><rect x="133" y="487" width="1" height="24" fill="#ff0080"/><rect x="133" y="510" width="2" height="2" fill="#ff0080"/><rect x="158" y="427.5" width="1" height="82.5" fill="#ff0080"/><rect x="157" y="497" width="1" height="13" fill="#ff0080"/><rect x="159" y="487" width="1" height="24" fill="#ff0080"/><rect x="159" y="510" width="2" height="2" fill="#ff0080"/><rect x="184" y="425.6" width="1" height="84.39999999999998" fill="#ff0080"/><rect x="183" y="497" width="1" height="13" fill="#ff0080"/><rect x="185" y="487" width="1" height="24" fill="#ff0080"/><rect x="185" y="510" width="2" height="2" fill="#ff0080"/><rect x="210" y="425.6" width="1" height="84.39999999999998" fill="#ff0080"/><rect x="209" y="497" width="1" height="13" fill="#ff0080"/><rect x="211" y="487" width="1" height="24" fill="#ff0080"/><rect x="211" y="510" width="2" height="2" fill="#ff0080"/><rect x="236" y="421.6" width="1" height="88.39999999999998" fill="#ff0080"/><rect x="235" y="497" width="1" height="13" fill="#ff0080"/><rect x="237" y="487" width="1" height="24" fill="#ff0080"/><rect x="237" y="510" width="2" height="2" fill="#ff0080"/><rect x="262" y="435" width="1" height="75" fill="#ff0080"/><rect x="261" y="497" width="1" height="13" fill="#ff0080"/><rect x="263" y="487" width="1" height="24" fill="#ff0080"/><rect x="263" y="510" width="2" height="2" fill="#ff0080"/><rect x="288" y="413" width="1" height="97" fill="#ff0080"/><rect x="287" y="497" width="1" height="13" fill="#ff0080"/><rect x="289" y="487" width="1" height="24" fill="#ff0080"/><rect x="289" y="510" width="2" height="2" fill="#ff0080"/><rect x="314" y="425" width="1" height="85" fill="#ff0080"/><rect x="313" y="497" width="1" height="13" fill="#ff0080"/><rect x="315" y="487" width="1" height="24" fill="#ff0080"/><rect x="315" y="510" width="2" height="2" fill="#ff0080"/><rect x="339" y="425.6" width="1" height="84.39999999999998" fill="#ff0080"/><rect x="338" y="497" width="1" height="13" fill="#ff0080"/><rect x="340" y="487" width="1" height="24" fill="#ff0080"/><rect x="340" y="510" width="2" height="2" fill="#ff0080"/><rect x="365" y="420" width="1" height="90" fill="#ff0080"/><rect x="364" y="497" width="1" height="13" fill="#ff0080"/><rect x="366" y="487" width="1" height="24" fill="#ff0080"/><rect x="366" y="510" width="2" height="2" fill="#ff0080"/><rect x="391" y="418" width="1" height="92" fill="#ff0080"/><rect x="390" y="497" width="1" height="13" fill="#ff0080"/><rect x="392" y="487" width="1" height="24" fill="#ff0080"/><rect x="392" y="510" width="2" height="2" fill="#ff0080"/><rect x="700" y="420" width="1" height="90" fill="#ff0080"/><rect x="699" y="497" width="1" height="13" fill="#ff0080"/><rect x="701" y="444" width="1" height="67" fill="#ff0080"/><rect x="701" y="510" width="2" height="2" fill="#ff0080"/><rect x="713" y="410" width="1" height="100" fill="#ff0080"/><rect x="712" y="443" width="1" height="67" fill="#ff0080"/><rect x="714" y="488" width="1" height="23" fill="#ff0080"/><rect x="714" y="510" width="2" height="2" fill="#ff0080"/><rect x="726" y="422" width="1" height="88" fill="#ff0080"/><rect x="725" y="503" width="1" height="7" fill="#ff0080"/><rect x="727" y="456" width="1" height="55" fill="#ff0080"/><rect x="727" y="510" width="2" height="2" fill="#ff0080"/><rect x="740" y="412" width="1" height="98" fill="#ff0080"/><rect x="739" y="504" width="1" height="6" fill="#ff0080"/><rect x="741" y="435" width="1" height="76" fill="#ff0080"/><rect x="741" y="510" width="2" height="2" fill="#ff0080"/><rect x="753" y="418" width="1" height="92" fill="#ff0080"/><rect x="752" y="445" width="1" height="65" fill="#ff0080"/><rect x="754" y="491" width="1" height="20" fill="#ff0080"/><rect x="754" y="510" width="2" height="2" fill="#ff0080"/><rect x="767" y="416" width="1" height="94" fill="#ff0080"/><rect x="766" y="501" width="1" height="9" fill="#ff0080"/><rect x="768" y="432" width="1" height="79" fill="#ff0080"/><rect x="768" y="510" width="2" height="2" fill="#ff0080"/><rect x="780" y="408" width="1" height="102" fill="#ff0080"/><rect x="779" y="497" width="1" height="13" fill="#ff0080"/><rect x="781" y="431" width="1" height="80" fill="#ff0080"/><rect x="781" y="510" width="2" height="2" fill="#ff0080"/><rect x="794" y="423" width="1" height="87" fill="#ff0080"/><rect x="793" y="505" width="1" height="5" fill="#ff0080"/><rect x="795" y="461" width="1" height="50" fill="#ff0080"/><rect x="795" y="510" width="2" height="2" fill="#ff0080"/><rect x="807" y="410" width="1" height="100" fill="#ff0080"/><rect x="806" y="502" width="1" height="8" fill="#ff0080"/><rect x="808" y="439" width="1" height="72" fill="#ff0080"/><rect x="808" y="510" width="2" height="2" fill="#ff0080"/><rect x="821" y="409" width="1" height="101" fill="#ff0080"/><rect x="820" y="503" width="1" height="7" fill="#ff0080"/><rect x="822" y="447" width="1" height="64" fill="#ff0080"/><rect x="822" y="510" width="2" height="2" fill="#ff0080"/><rect x="834" y="421" width="1" height="89" fill="#ff0080"/><rect x="833" y="441" width="1" height="69" fill="#ff0080"/><rect x="835" y="491" width="1" height="20" fill="#ff0080"/><rect x="835" y="510" width="2" height="2" fill="#ff0080"/><rect x="848" y="407" width="1" height="103" fill="#ff0080"/><rect x="847" y="446" width="1" height="64" fill="#ff0080"/><rect x="849" y="497" width="1" height="14" fill="#ff0080"/><rect x="849" y="510" width="2" height="2" fill="#ff0080"/><rect x="861" y="417" width="1" height="93" fill="#ff0080"/><rect x="860" y="442" width="1" height="68" fill="#ff0080"/><rect x="862" y="500" width="1" height="11" fill="#ff0080"/><rect x="862" y="510" width="2" height="2" fill="#ff0080"/><rect x="874" y="412" width="1" height="98" fill="#ff0080"/><rect x="873" y="446" width="1" height="64" fill="#ff0080"/><rect x="875" y="488" width="1" height="23" fill="#ff0080"/><rect x="875" y="510" width="2" height="2" fill="#ff0080"/><rect x="888" y="410" width="1" height="100" fill="#ff0080"/><rect x="887" y="501" width="1" height="9" fill="#ff0080"/><rect x="889" y="462" width="1" height="49" fill="#ff0080"/><rect x="889" y="510" width="2" height="2" fill="#ff0080"/><rect x="901" y="421" width="1" height="89" fill="#ff0080"/><rect x="900" y="446" width="1" height="64" fill="#ff0080"/><rect x="902" y="492" width="1" height="19" fill="#ff0080"/><rect x="902" y="510" width="2" height="2" fill="#ff0080"/><rect x="915" y="414" width="1" height="96" fill="#ff0080"/><rect x="914" y="500" width="1" height="10" fill="#ff0080"/><rect x="916" y="447" width="1" height="64" fill="#ff0080"/><rect x="916" y="510" width="2" height="2" fill="#ff0080"/><rect x="1265" y="408" width="1" height="102" fill="#ff0080"/><rect x="1264" y="504" width="1" height="6" fill="#ff0080"/><rect x="1266" y="458" width="1" height="53" fill="#ff0080"/><rect x="1266" y="510" width="2" height="2" fill="#ff0080"/><line x1="391.5" y1="363" x2="391.5" y2="640" stroke="#fff" stroke-width="1" stroke-dasharray="9 6 3 6"/><path shape-rendering="geometricPrecision" d="M386.0,412.5 L391.5,419 L397.0,412.5 H393.0 V405 H390.0 V412.5 Z" fill="#fff"/><path shape-rendering="geometricPrecision" d="M386.0,617.0 L391.5,623.5 L397.0,617.0 H393.0 V609.5 H390.0 V617.0 Z" fill="#fff"/><line x1="699" y1="363" x2="699" y2="640" stroke="#fff" stroke-width="2" stroke-dasharray="18 6"/><path shape-rendering="geometricPrecision" d="M693.0,514.5 L698.5,508 L704.0,514.5 H700.0 V522 H697.0 V514.5 Z" fill="#fff"/><path shape-rendering="geometricPrecision" d="M693.0,585.5 L698.5,579 L704.0,585.5 H700.0 V593 H697.0 V585.5 Z" fill="#fff"/>
</svg>
<div class="yl" style="top:41.6px">19.95 V</div>
<div class="yl" style="top:69.6px">14.95 V</div>
<div class="yl" style="top:105.6px">9.95 V</div>
<div class="yl" style="top:142.6px">4.95 V</div>
<div class="yl" style="top:178.6px">-50 mV</div>
<div class="yl" style="top:215.6px">-5.05 V</div>
<div class="yl" style="top:251.6px">-10.05 V</div>
<div class="yl" style="top:288.6px">-15.05 V</div>
<div class="yl" style="top:317.6px">-20.05 V</div>
<div class="yl" style="top:366.6px;left:4.5px">12.7 V</div>
<div class="yl" style="top:394.6px;left:4.5px">9.55 V</div>
<div class="yl" style="top:430.6px;left:4.5px">6.4 V</div>
<div class="yl" style="top:467.6px;left:4.5px">3.25 V</div>
<div class="yl" style="top:503.6px;left:4.5px">100 mV</div>
<div class="yl" style="top:540.6px;left:4.5px">-3.05 V</div>
<div class="yl" style="top:576.6px;left:4.5px">-6.2 V</div>
<div class="yl" style="top:613.6px;left:4.5px">-9.35 V</div>
<div class="yl" style="top:642.6px;left:4.5px">-12.5 V</div>
<div class="a" style="left:70px;top:334px;font-size:12px;color:#ff1a8c">-236 ms</div>
<div class="xl" style="left:140.5px;top:334px">-186 ms</div>
<div class="xl" style="left:260.5px;top:334px">-136 ms</div>
<div class="xl" style="left:380.5px;top:334px">-86 ms</div>
<div class="xl" style="left:500.5px;top:334px">-36 ms</div>
<div class="xl" style="left:620.5px;top:334px">14 ms</div>
<div class="xl" style="left:740.5px;top:334px">64 ms</div>
<div class="xl" style="left:860.5px;top:334px">114 ms</div>
<div class="xl" style="left:980.5px;top:334px">164 ms</div>
<div class="xl" style="left:1100.5px;top:334px">214 ms</div>
<div class="a" style="right:10px;top:334px;font-size:12px;color:#ff1a8c">264 ms</div>
<div class="a" style="left:71.5px;top:659px;font-size:12px;color:#ff1a8c;word-spacing:-1px">136.039 ms</div>
<div class="xl" style="left:261px;top:659px;word-spacing:-1px">136.255 ms</div>
<div class="xl" style="left:501px;top:659px;word-spacing:-1px">136.471 ms</div>
<div class="xl" style="left:741px;top:659px;word-spacing:-1px">136.687 ms</div>
<div class="xl" style="left:981px;top:659px;word-spacing:-1px">136.903 ms</div>
<div class="a" style="right:9.5px;top:659px;font-size:12px;color:#ff1a8c;word-spacing:-1px">137.119 ms</div>
<div class="a" style="left:54px;top:171px;width:16px;height:11px;background:#ff0080;border-radius:2px;font-size:10px;line-height:11px;color:#111;text-align:center">C2</div>
<svg class="a" style="left:58px;top:182px" width="12" height="4"><path d="M2,1 H12 V3 H3 Z" fill="#ff0080"/></svg>
<svg class="a" style="left:58px;top:508px" width="12" height="4"><path d="M2,1 H12 V3 H3 Z" fill="#ff0080"/></svg>
<div class="a" style="left:57px;top:247px;font-size:10px;color:#ffff00">C1</div>
<div class="a" style="left:60px;top:257px;width:10px;height:2px;background:#ffff00"></div>
<div class="a" style="left:55px;top:497px;width:15px;height:11px;background:#ff0080;border-radius:2px;font-size:10px;line-height:11px;color:#111;text-align:center">Z2</div>
<div class="a" style="left:58px;top:640px;font-size:10px;color:#ffff00">Z1</div>
<div class="a" style="left:62px;top:651px;width:8px;height:2px;background:#ffff00"></div>
<svg class="a" style="left:62px;top:654px" width="10" height="10"><path d="M9,4.5 H2 M5,1.5 L1.5,4.5 L5,7.5" stroke="#ff1a8c" stroke-width="1.3" fill="none"/></svg>
<div class="a" style="left:956px;top:317px;font-size:10px;font-weight:bold;color:#fff">C2</div>
<div class="a" style="left:385px;top:642px;font-size:10px;color:#fff">Z2</div>
<div class="a" style="left:692.5px;top:642px;font-size:10px;color:#fff">Z2</div>
<div class="box" style="left:4px;width:97px;background:#464646">
<div class="hd" style="background:#ffff00">C1</div>
<div class="bdg" style="left:50px;width:12px;color:#ffff00">F</div>
<div class="bdg" style="left:63px;width:11px;color:#ffff00">B</div>
<div class="bdg" style="left:75px;width:19px;color:#ffff00">D1</div>
<svg class="a" style="left:0;top:0" width="20" height="94"><g stroke="#d8d4b8" stroke-width="1" fill="none" shape-rendering="auto"><path d="M6.5,51 V62.5 M4,59.5 L6.5,62.5 L9,59.5"/><path d="M6.5,66.5 V78 M4,69.5 L6.5,66.5 L9,69.5"/></g></svg>
<div class="rw" style="top:18.5px"><span class="l"></span><span class="r">2.00 V/div</span></div>
<div class="rw" style="top:33.4px"><span class="l"></span><span class="r">-4.05000 V</span></div>
<div class="rw" style="top:48.3px"><span class="l"></span><span class="r">990.25 mV</span></div>
<div class="rw" style="top:63.2px"><span class="l"></span><span class="r">2.51650 V</span></div>
<div class="rw" style="top:78.1px"><span class="l">&#916;y</span><span class="r">1.52625 V</span></div>
</div>
<div class="box" style="left:104px;width:97px;background:#464646">
<div class="hd" style="background:#ff0080">C2</div>
<div class="bdg" style="left:50px;width:12px;color:#ff0080">F</div>
<div class="bdg" style="left:63px;width:11px;color:#ff0080">B</div>
<div class="bdg" style="left:75px;width:19px;color:#ff0080">D1</div>
<svg class="a" style="left:0;top:0" width="20" height="94"><g stroke="#d8d4b8" stroke-width="1" fill="none" shape-rendering="auto"><path d="M6.5,51 V62.5 M4,59.5 L6.5,62.5 L9,59.5"/><path d="M6.5,66.5 V78 M4,69.5 L6.5,66.5 L9,69.5"/></g></svg>
<div class="rw" style="top:18.5px"><span class="l"></span><span class="r">5.00 V/div</span></div>
<div class="rw" style="top:33.4px"><span class="l"></span><span class="r">50.0 mV</span></div>
<div class="rw" style="top:48.3px"><span class="l"></span><span class="r">7.8475 V</span></div>
<div class="rw" style="top:63.2px"><span class="l"></span><span class="r">162.5 mV</span></div>
<div class="rw" style="top:78.1px"><span class="l">&#916;y</span><span class="r">-7.6850 V</span></div>
</div>
<div class="box" style="left:204px;width:97px;background:#464646">
<div class="hd" style="background:#ffff00">Z1</div>
<div class="a" style="right:3px;top:2px;font-size:13px;color:#111">zoom(C1)</div>
<svg class="a" style="left:0;top:0" width="20" height="94"><g stroke="#d8d4b8" stroke-width="1" fill="none" shape-rendering="auto"><path d="M6.5,51 V62.5 M4,59.5 L6.5,62.5 L9,59.5"/><path d="M6.5,66.5 V78 M4,69.5 L6.5,66.5 L9,69.5"/></g></svg>
<div class="rw" style="top:18.5px"><span class="l"></span><span class="r">1.26 V/div</span></div>
<div class="rw" style="top:33.4px"><span class="l"></span><span class="r">108 &#956;s/div</span></div>
<div class="rw" style="top:48.3px"><span class="l"></span><span class="r">990.25 mV</span></div>
<div class="rw" style="top:63.2px"><span class="l"></span><span class="r">2.51650 V</span></div>
<div class="rw" style="top:78.1px"><span class="l">&#916;y</span><span class="r">1.52625 V</span></div>
<div class="a" style="left:0;bottom:-1px;width:97px;height:2px;background:#00c000"></div>
</div>
<div class="a" style="left:303px;top:686px;width:98px;height:96px;background:#2196f3"></div>
<div class="box" style="left:304px;width:97px;background:#2c4a66">
<div class="hd" style="background:#ff0080">Z2</div>
<div class="a" style="right:3px;top:2px;font-size:13px;color:#111">zoom(C2)</div>
<svg class="a" style="left:0;top:0" width="20" height="94"><g stroke="#d8d4b8" stroke-width="1" fill="none" shape-rendering="auto"><path d="M6.5,51 V62.5 M4,59.5 L6.5,62.5 L9,59.5"/><path d="M6.5,66.5 V78 M4,69.5 L6.5,66.5 L9,69.5"/></g></svg>
<div class="rw" style="top:18.5px"><span class="l"></span><span class="r">3.15 V/div</span></div>
<div class="rw" style="top:33.4px"><span class="l"></span><span class="r">108 &#956;s/div</span></div>
<div class="rw" style="top:48.3px"><span class="l"></span><span class="r">7.8475 V</span></div>
<div class="rw" style="top:63.2px"><span class="l"></span><span class="r">162.5 mV</span></div>
<div class="rw" style="top:78.1px"><span class="l">&#916;y</span><span class="r">-7.6850 V</span></div>
<div class="a" style="left:0;top:16px;width:1px;height:78px;background:#2196f3"></div>
<div class="a" style="right:0;top:16px;width:1px;height:78px;background:#2196f3"></div>
<div class="a" style="left:0;bottom:-1px;width:97px;height:2px;background:#00c000"></div>
</div>
<div class="a" style="left:404px;top:687px;width:97px;height:94px;border:1px dashed #ddd"></div>
<div class="a" style="left:443px;top:733px;width:15px;height:2px;background:#fff"></div>
<div class="a" style="left:450px;top:726px;width:2px;height:15px;background:#fff"></div>
<div class="a" style="left:1004px;top:687px;width:55px;height:15px;background:#00ee00;font-size:13px;font-weight:bold;line-height:15px;text-align:center;color:#000">HD</div>
<div class="a" style="left:1004px;top:702px;width:55px;height:33px;background:#464646;font-size:13px;line-height:33px;text-align:center;color:#f0f0f0">12 Bits</div>
<div class="a" style="left:1064px;top:687px;width:110px;height:15px;background:#fafafa"></div>
<div class="a" style="left:1067px;top:688px;font-size:13px;color:#111">Tbase</div>
<div class="a" style="left:1064px;top:702px;width:111px;height:33px;background:#464646"></div>
<div class="a" style="right:108px;top:688px;font-size:13px;color:#111">-14 ms</div>
<div class="a" style="right:106px;top:706px;font-size:13px;color:#f0f0f0">50.0 ms/div</div>
<div class="a" style="left:1067px;top:721px;font-size:13px;color:#f0f0f0">2.5 MS</div>
<div class="a" style="right:106px;top:721px;font-size:13px;color:#f0f0f0">5 MS/s</div>
<div class="a" style="left:1178px;top:687px;width:97px;height:15px;background:#fafafa"></div>
<div class="a" style="left:1181px;top:688px;font-size:13px;color:#111">Trigger</div>
<div class="a" style="left:1229px;top:688px;width:19px;height:13px;background:#000;border-radius:3px;font-size:11px;line-height:13px;text-align:center;color:#fff">C1</div>
<div class="a" style="left:1251px;top:688px;width:21px;height:13px;background:#000;border-radius:3px;font-size:11px;line-height:13px;text-align:center;color:#fff">DC</div>
<div class="a" style="left:1178px;top:702px;width:97px;height:33px;background:#464646"></div>
<div class="a" style="left:1181px;top:706px;font-size:13px;color:#f0f0f0">Stop</div>
<div class="a" style="right:7px;top:706px;font-size:13px;color:#f0f0f0">2.42 V</div>
<div class="a" style="left:1181px;top:721px;font-size:13px;color:#f0f0f0">SlewRate</div>
<div class="a" style="right:7px;top:721px;font-size:13px;color:#f0f0f0">Pos</div>
<div class="a" style="left:1009px;top:738px;font-size:13px;color:#f0f0f0">X1=</div>
<div class="a" style="left:1041px;top:738px;font-size:13px;color:#f0f0f0">136.3284 ms</div>
<div class="a" style="left:1135px;top:738px;font-size:13px;color:#f0f0f0">&#916;X=</div>
<div class="a" style="left:1177px;top:738px;font-size:13px;color:#f0f0f0">276.6 &#956;s</div>
<div class="a" style="left:1009px;top:753px;font-size:13px;color:#f0f0f0">X2=</div>
<div class="a" style="left:1041px;top:753px;font-size:13px;color:#f0f0f0">136.6050 ms</div>
<div class="a" style="left:1125px;top:753px;font-size:13px;color:#f0f0f0">1/&#916;X=</div>
<div class="a" style="left:1170px;top:753px;font-size:13px;color:#f0f0f0">3.615 kHz</div>
<div class="a" style="left:0;top:783px;width:1280px;height:17px;background:#262626;border-top:1px solid #505858"></div>
<div class="a" style="left:1129px;top:783px;width:134px;height:17px;background:#262626;border-right:1px solid #111"></div>
<div class="a" style="left:1130px;top:786px;font-size:13px;color:#f0f0f0;letter-spacing:-0.1px">11/13/2023 6:02:05 AM</div>
<div class="a" style="left:7px;top:785px;font-size:16px;font-weight:bold;color:#f0f0f0;transform:scaleX(0.774);transform-origin:0 0">TELEDYNE</div>
<div class="a" style="left:78px;top:785px;font-size:16px;color:#c8c8c8;transform:scaleX(0.669);transform-origin:0 0">LECROY</div>
</body></html>
